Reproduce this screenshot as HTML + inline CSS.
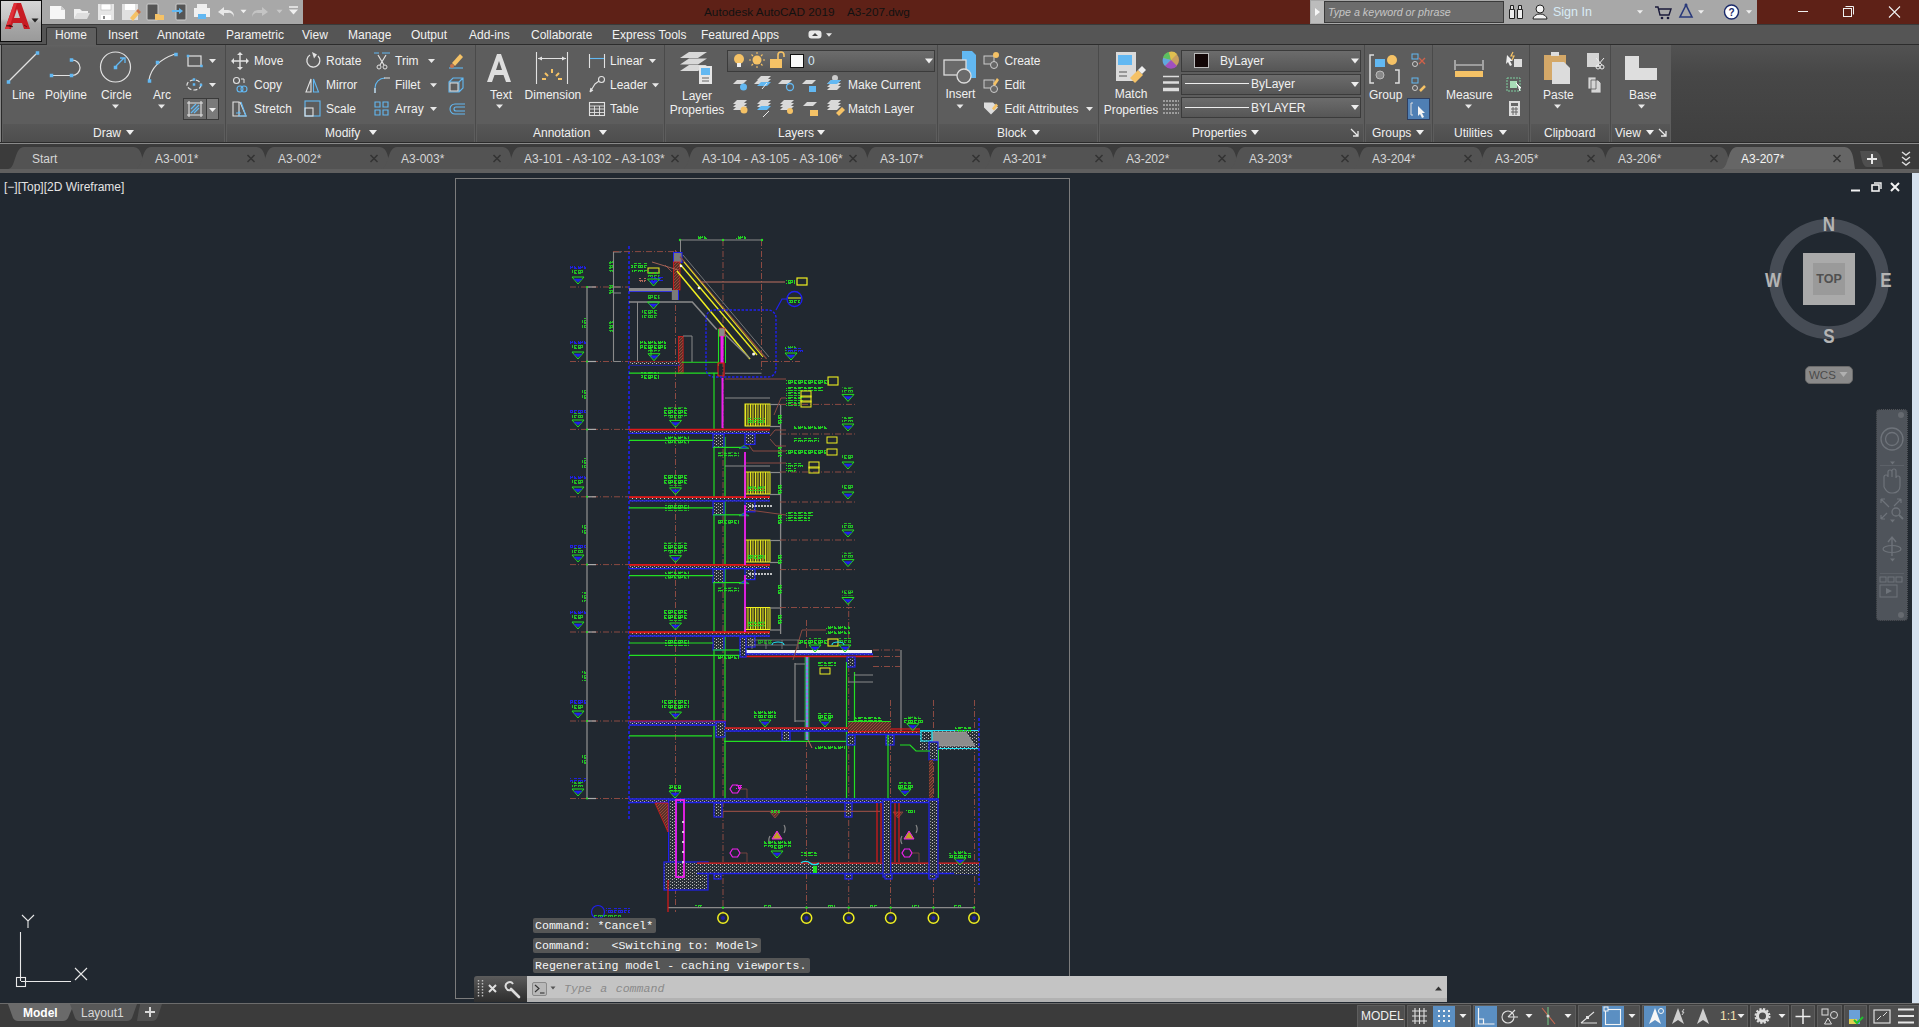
<!DOCTYPE html><html><head><meta charset="utf-8"><style>
html,body{margin:0;padding:0;width:1919px;height:1027px;overflow:hidden;background:#212830;font-family:"Liberation Sans", sans-serif;}
div{box-sizing:border-box;}
</style></head><body>
<div style="position:absolute;left:0px;top:0px;width:1919px;height:24px;background:#5e2117;"></div>
<div style="position:absolute;left:41px;top:0px;width:262px;height:24px;background:#a8a8a8;"></div>
<div style="position:absolute;left:1310px;top:0px;width:447px;height:24px;background:#a8a8a8;"></div>
<div style="position:absolute;left:1311px;top:1px;width:13px;height:22px;background:#bcbcbc;"></div>
<div style="position:absolute;left:1324px;top:1px;width:180px;height:22px;background:#6c6c6c;border:1px solid #3a3a3a;"></div>
<div style="position:absolute;left:0px;top:24px;width:1919px;height:20px;background:#555555;"></div>
<div style="position:absolute;left:0px;top:24px;width:1919px;height:1px;background:#3a3a3a;"></div>
<div style="position:absolute;left:0px;top:44px;width:1919px;height:1px;background:#2c2c2c;"></div>
<div style="position:absolute;left:0px;top:0px;width:42px;height:42px;background:#0c0c0c;"></div>
<div style="position:absolute;left:1px;top:1px;width:40px;height:40px;background:linear-gradient(#d6d6d6,#c4c4c4 45%,#a8a8a8 55%,#9a9a9a);"></div>
<div style="position:absolute;left:46px;top:27px;width:51px;height:18px;background:#5f5f5f;border:1px solid #2e2e2e;border-bottom:none;border-radius:2px 2px 0 0;"></div>
<div style="position:absolute;left:0px;top:45px;width:1919px;height:98px;background:linear-gradient(#525252,#474747 30%,#3f3f3f);"></div>
<div style="position:absolute;left:2px;top:45px;width:223px;height:97px;background:linear-gradient(#626262,#5d5d5d 3px,#5d5d5d);"></div>
<div style="position:absolute;left:3px;top:124px;width:221px;height:18px;background:linear-gradient(#575757,#4e4e4e);"></div>
<div style="position:absolute;left:225px;top:45px;width:1px;height:97px;background:#4a4a4a;"></div>
<div style="position:absolute;left:226px;top:45px;width:249px;height:97px;background:linear-gradient(#626262,#5d5d5d 3px,#5d5d5d);"></div>
<div style="position:absolute;left:227px;top:124px;width:247px;height:18px;background:linear-gradient(#575757,#4e4e4e);"></div>
<div style="position:absolute;left:475px;top:45px;width:1px;height:97px;background:#4a4a4a;"></div>
<div style="position:absolute;left:476px;top:45px;width:188px;height:97px;background:linear-gradient(#626262,#5d5d5d 3px,#5d5d5d);"></div>
<div style="position:absolute;left:477px;top:124px;width:186px;height:18px;background:linear-gradient(#575757,#4e4e4e);"></div>
<div style="position:absolute;left:664px;top:45px;width:1px;height:97px;background:#4a4a4a;"></div>
<div style="position:absolute;left:665px;top:45px;width:272px;height:97px;background:linear-gradient(#626262,#5d5d5d 3px,#5d5d5d);"></div>
<div style="position:absolute;left:666px;top:124px;width:270px;height:18px;background:linear-gradient(#575757,#4e4e4e);"></div>
<div style="position:absolute;left:937px;top:45px;width:1px;height:97px;background:#4a4a4a;"></div>
<div style="position:absolute;left:938px;top:45px;width:160px;height:97px;background:linear-gradient(#626262,#5d5d5d 3px,#5d5d5d);"></div>
<div style="position:absolute;left:939px;top:124px;width:158px;height:18px;background:linear-gradient(#575757,#4e4e4e);"></div>
<div style="position:absolute;left:1098px;top:45px;width:1px;height:97px;background:#4a4a4a;"></div>
<div style="position:absolute;left:1099px;top:45px;width:265px;height:97px;background:linear-gradient(#626262,#5d5d5d 3px,#5d5d5d);"></div>
<div style="position:absolute;left:1100px;top:124px;width:263px;height:18px;background:linear-gradient(#575757,#4e4e4e);"></div>
<div style="position:absolute;left:1364px;top:45px;width:1px;height:97px;background:#4a4a4a;"></div>
<div style="position:absolute;left:1365px;top:45px;width:67px;height:97px;background:linear-gradient(#626262,#5d5d5d 3px,#5d5d5d);"></div>
<div style="position:absolute;left:1366px;top:124px;width:65px;height:18px;background:linear-gradient(#575757,#4e4e4e);"></div>
<div style="position:absolute;left:1432px;top:45px;width:1px;height:97px;background:#4a4a4a;"></div>
<div style="position:absolute;left:1433px;top:45px;width:96px;height:97px;background:linear-gradient(#626262,#5d5d5d 3px,#5d5d5d);"></div>
<div style="position:absolute;left:1434px;top:124px;width:94px;height:18px;background:linear-gradient(#575757,#4e4e4e);"></div>
<div style="position:absolute;left:1529px;top:45px;width:1px;height:97px;background:#4a4a4a;"></div>
<div style="position:absolute;left:1530px;top:45px;width:80px;height:97px;background:linear-gradient(#626262,#5d5d5d 3px,#5d5d5d);"></div>
<div style="position:absolute;left:1531px;top:124px;width:78px;height:18px;background:linear-gradient(#575757,#4e4e4e);"></div>
<div style="position:absolute;left:1610px;top:45px;width:1px;height:97px;background:#4a4a4a;"></div>
<div style="position:absolute;left:1611px;top:45px;width:60px;height:97px;background:linear-gradient(#626262,#5d5d5d 3px,#5d5d5d);"></div>
<div style="position:absolute;left:1612px;top:124px;width:58px;height:18px;background:linear-gradient(#575757,#4e4e4e);"></div>
<div style="position:absolute;left:1671px;top:45px;width:0px;height:97px;background:#4a4a4a;"></div>
<div style="position:absolute;left:0px;top:45px;width:1px;height:98px;background:#8a8a8a;"></div>
<div style="position:absolute;left:1px;top:45px;width:1px;height:97px;background:#2a2a2a;"></div>
<div style="position:absolute;left:0px;top:142px;width:1919px;height:1px;background:#2a2a2a;"></div>
<div style="position:absolute;left:0px;top:143px;width:1919px;height:1px;background:#8a8a8a;"></div>
<div style="position:absolute;left:183px;top:98px;width:36px;height:22px;background:#3a3a3a;"></div>
<div style="position:absolute;left:184px;top:99px;width:22px;height:20px;background:#6a6a6a;"></div>
<div style="position:absolute;left:207px;top:99px;width:11px;height:20px;background:#7a7a7a;"></div>
<div style="position:absolute;left:727px;top:50px;width:208px;height:22px;background:linear-gradient(#6c6c6c,#575757);border:1px solid #3b3b3b;"></div>
<div style="position:absolute;left:1181px;top:50px;width:180px;height:22px;background:linear-gradient(#6c6c6c,#565656);border:1px solid #3b3b3b;"></div>
<div style="position:absolute;left:1181px;top:74px;width:180px;height:21px;background:linear-gradient(#6c6c6c,#565656);border:1px solid #3b3b3b;"></div>
<div style="position:absolute;left:1181px;top:97px;width:180px;height:21px;background:linear-gradient(#6c6c6c,#565656);border:1px solid #3b3b3b;"></div>
<div style="position:absolute;left:1194px;top:53px;width:15px;height:15px;background:#120606;border:1px solid #bbb;"></div>
<div style="position:absolute;left:1185px;top:83px;width:64px;height:1px;background:#eeeeee;"></div>
<div style="position:absolute;left:1185px;top:107px;width:64px;height:1px;background:#eeeeee;"></div>
<div style="position:absolute;left:1407px;top:98px;width:23px;height:22px;background:#4f7fb4;border:1px solid #2f3f5f;"></div>
<div style="position:absolute;left:0px;top:144px;width:1919px;height:29px;background:#3b3b3b;"></div>
<div style="position:absolute;left:0px;top:169px;width:1919px;height:4px;background:#5f5f5f;"></div>
<svg width="1919" height="1027" style="position:absolute;left:0;top:0"><path d="M126.0 130.0h8l-4.0 5z" fill="#f0f0f0"/><path d="M369.0 130.0h8l-4.0 5z" fill="#f0f0f0"/><path d="M599.0 130.0h8l-4.0 5z" fill="#f0f0f0"/><path d="M817.0 130.0h8l-4.0 5z" fill="#f0f0f0"/><path d="M1032.0 130.0h8l-4.0 5z" fill="#f0f0f0"/><path d="M1251.0 130.0h8l-4.0 5z" fill="#f0f0f0"/><path d="M1416.0 130.0h8l-4.0 5z" fill="#f0f0f0"/><path d="M1499.0 130.0h8l-4.0 5z" fill="#f0f0f0"/><path d="M1646.0 130.0h8l-4.0 5z" fill="#f0f0f0"/><path d="M1351 129l7 7M1358 131v5h-5" stroke="#e8e8e8" stroke-width="1.3" fill="none"/><path d="M1659 129l7 7M1666 131v5h-5" stroke="#e8e8e8" stroke-width="1.3" fill="none"/><line x1="9" y1="81" x2="36" y2="54" stroke="#e2e2e2" stroke-width="1.2"/><rect x="6.75" y="80.25" width="3.5" height="3.5" fill="#62b8f2"/><rect x="35.75" y="51.25" width="3.5" height="3.5" fill="#62b8f2"/><path d="M53 75.5H70M72 60a8 7.7 0 0 1 0 15.5" stroke="#e2e2e2" stroke-width="1.2" fill="none"/><rect x="49.75" y="73.75" width="3.5" height="3.5" fill="#62b8f2"/><rect x="69.75" y="73.75" width="3.5" height="3.5" fill="#62b8f2"/><rect x="69.75" y="58.25" width="3.5" height="3.5" fill="#62b8f2"/><circle cx="115.5" cy="67" r="15" stroke="#e2e2e2" stroke-width="1.2" fill="none"/><path d="M116 66l8-8M120 58h5v5" stroke="#62b8f2" stroke-width="1.3" fill="none"/><rect x="113.75" y="65.75" width="3.5" height="3.5" fill="#62b8f2"/><path d="M112.0 104.5h7l-3.5 4z" fill="#e8e8e8"/><path d="M149 80Q152 62 175 54" stroke="#e2e2e2" stroke-width="1.2" fill="none"/><rect x="147.75" y="79.25" width="3.5" height="3.5" fill="#62b8f2"/><rect x="155.75" y="60.75" width="3.5" height="3.5" fill="#62b8f2"/><rect x="174.25" y="52.75" width="3.5" height="3.5" fill="#62b8f2"/><path d="M158.0 104.5h7l-3.5 4z" fill="#e8e8e8"/><rect x="188" y="56" width="13" height="10" stroke="#e2e2e2" stroke-width="1.2" fill="none"/><rect x="186.75" y="54.75" width="2.5" height="2.5" fill="#62b8f2"/><rect x="200.25" y="64.75" width="2.5" height="2.5" fill="#62b8f2"/><path d="M209.0 59.0h7l-3.5 4z" fill="#e8e8e8"/><ellipse cx="194" cy="85" rx="7" ry="5" stroke="#e2e2e2" stroke-width="1.2" fill="none" stroke-dasharray="4 2"/><rect x="192.75" y="83.25" width="2.5" height="2.5" fill="#62b8f2"/><rect x="192.75" y="78.25" width="2.5" height="2.5" fill="#62b8f2"/><rect x="199.75" y="83.75" width="2.5" height="2.5" fill="#62b8f2"/><path d="M209.0 83.0h7l-3.5 4z" fill="#e8e8e8"/><path d="M187 103h16M187 115h16M189 101v16M201 101v16" stroke="#e2e2e2" stroke-width="1.1"/><path d="M191 113l8-8M191 109l5-5M194 113l5-5" stroke="#62b8f2" stroke-width="1.2"/><path d="M209.0 108.0h7l-3.5 4z" fill="#f0f0f0"/><path d="M240 53v16M232 61h16" stroke="#e2e2e2" stroke-width="1.4"/><path d="M240 52l-3 3h6zM240 70l-3-3h6zM231 61l3-3v6zM249 61l-3-3v6z" fill="#e2e2e2"/><path d="M318 56a6.5 6.5 0 1 1-8-1" stroke="#e2e2e2" stroke-width="1.3" fill="none"/><path d="M312 52l5 2.5-3 4z" fill="#e2e2e2"/><path d="M374 53h5M382 53h8" stroke="#62b8f2" stroke-width="1.1"/><path d="M378 55l6 10M386 55l-6 10" stroke="#e2e2e2" stroke-width="1.2"/><circle cx="379" cy="67" r="2" stroke="#e2e2e2" fill="none"/><circle cx="385" cy="67" r="2" stroke="#e2e2e2" fill="none"/><path d="M428.0 59.0h7l-3.5 4z" fill="#e8e8e8"/><path d="M449 68h14" stroke="#62b8f2" stroke-width="1.1"/><path d="M452 63l8-9 3 3-8 9z" fill="#f5c266"/><circle cx="452" cy="66" r="2" fill="#c9744a"/><circle cx="236.5" cy="80.5" r="3" stroke="#e2e2e2" fill="none" stroke-width="1.1"/><path d="M241 79h3v4" stroke="#e2e2e2" fill="none"/><circle cx="240" cy="89" r="3" stroke="#62b8f2" fill="none" stroke-width="1.1"/><circle cx="244" cy="89" r="3" stroke="#62b8f2" fill="none" stroke-width="1.1"/><path d="M311 92h-5l5-13z" stroke="#e2e2e2" fill="none" stroke-width="1.1"/><path d="M313.5 92h5l-5-13z" stroke="#62b8f2" fill="none" stroke-width="1.1"/><path d="M375 93v-5a10 10 0 0 1 10-10" stroke="#62b8f2" fill="none" stroke-width="1.1"/><path d="M384 78h6M375 88v5" stroke="#e2e2e2" stroke-width="1.1"/><path d="M430.0 83.3h7l-3.5 4z" fill="#e8e8e8"/><path d="M449 82h10v10h-10zM449 82l4-4h10v10l-4 4M459 82l4-4" stroke="#62b8f2" fill="none" stroke-width="1.1"/><rect x="450" y="83" width="8" height="8" stroke="#e2e2e2" fill="none"/><path d="M233 116v-14h6v14zM240 102l6 14h-10" stroke="#e2e2e2" fill="none" stroke-width="1.1"/><path d="M241 102l5 14h-8M236 113h4l-1.5-1.5" stroke="#62b8f2" fill="none" stroke-width="1.1"/><rect x="305" y="101" width="15" height="15" stroke="#62b8f2" fill="none" stroke-width="1.1"/><rect x="305" y="108" width="8" height="8" stroke="#e2e2e2" fill="none" stroke-width="1.1"/><path d="M375 102h5v5h-5zM383 102h5v5h-5zM375 110h5v5h-5zM383 110h5v5h-5z" stroke="#62b8f2" fill="none" stroke-width="1.1"/><path d="M430.0 107.0h7l-3.5 4z" fill="#e8e8e8"/><path d="M465 104h-10a5 5 0 0 0 0 10h10M465 107h-9a2 2 0 0 0 0 4h9" stroke="#62b8f2" fill="none" stroke-width="1.1"/><path d="M487 82l10-28h4l10 28h-5l-2.5-7h-9l-2.5 7zM496 70h6l-3-9z" fill="#dedede" fill-rule="evenodd"/><path d="M496.0 104.5h7l-3.5 4z" fill="#e8e8e8"/><path d="M536.5 52v32M567.5 52v32M538 58.5h28" stroke="#e2e2e2" stroke-width="1.1"/><path d="M538 58.5l4-2v4zM566 58.5l-4-2v4z" fill="#e2e2e2"/><path d="M552 69v4M545 73l3 3M559 73l-3 3M542 79h4M558 79h4" stroke="#f5c266" stroke-width="2"/><path d="M589.5 54v14M604.5 54v14" stroke="#e2e2e2" stroke-width="1.1"/><path d="M590 58.5h14" stroke="#62b8f2" stroke-width="1.1"/><path d="M649.0 59.0h7l-3.5 4z" fill="#e8e8e8"/><circle cx="601.5" cy="79.5" r="3" stroke="#e2e2e2" fill="none" stroke-width="1.1"/><path d="M599 81l-4 3-5 8M590 92l1-4M590 92l3-2" stroke="#e2e2e2" fill="none" stroke-width="1.1"/><path d="M652.0 83.3h7l-3.5 4z" fill="#e8e8e8"/><rect x="589.5" y="102.5" width="15" height="13" stroke="#e2e2e2" fill="none" stroke-width="1.1"/><path d="M590 106h14M590 109h14M590 112.5h14M594.5 106v9M599.5 106v9" stroke="#e2e2e2" stroke-width="0.9"/><path d="M689 52.0h18l-9 6h-18z" fill="#d9d9d9"/><path d="M689 58.5h18l-9 6h-18z" fill="#d9d9d9"/><path d="M689 65.0h18l-9 6h-18z" fill="#d9d9d9"/><rect x="699" y="66" width="13" height="18" fill="#e6e6e6"/><rect x="701" y="68" width="9" height="7" fill="#62b8f2"/><path d="M702 78h7M702 81h7" stroke="#555" stroke-width="0.9"/><circle cx="739" cy="59" r="5" fill="#f5c266"/><rect x="737" y="63" width="4" height="4" fill="#eee"/><circle cx="757" cy="60" r="4.5" fill="#f5c266"/><path d="M757 52v2M757 66v2M749 60h2M763 60h2M751.5 54.5l1.5 1.5M761 64l1.5 1.5M751.5 65.5l1.5-1.5M761 56l1.5-1.5" stroke="#f5c266" stroke-width="1.1"/><rect x="770" y="59" width="12" height="9" fill="#f5c266"/><path d="M778 59v-4a3 3 0 0 1 6 0v2" stroke="#f5c266" stroke-width="1.6" fill="none"/><rect x="790.5" y="54.5" width="13" height="13" fill="#fafafa" stroke="#111"/><path d="M925.0 58.5h8l-4.0 5z" fill="#eee"/><path d="M733 84l4-4h10l-4 4z" fill="#d9d9d9"/><path d="M754 84l4-4h10l-4 4z" fill="#d9d9d9"/><path d="M778 84l4-4h10l-4 4z" fill="#d9d9d9"/><path d="M802 84l4-4h10l-4 4z" fill="#d9d9d9"/><circle cx="743.5" cy="87" r="3.5" fill="#62b8f2"/><path d="M757 80l4-4h10l-4 4zM757 83l4-4h10l-4 4z" fill="#d9d9d9"/><path d="M757 86l4-4h10l-4 4z" fill="#62b8f2"/><path d="M767 83l-5 6" stroke="#eee"/><circle cx="790" cy="87" r="3.5" fill="none" stroke="#62b8f2" stroke-width="1.3"/><rect x="809" y="86" width="7" height="6" fill="#62b8f2"/><circle cx="835" cy="78" r="3" fill="#ccc"/><path d="M827 84l4-4h10l-4 4zM827 87l4-4h10l-4 4zM827 90l4-4h10l-4 4z" fill="#d9d9d9"/><path d="M827 84l4-4h10l-4 4z" fill="#62b8f2"/><path d="M733 104l4-4h10l-4 4zM733 107l4-4h10l-4 4zM733 110l4-4h10l-4 4z" fill="#d9d9d9"/><circle cx="744" cy="110" r="3.5" fill="#f5c266"/><path d="M757 104l4-4h10l-4 4zM757 107l4-4h10l-4 4z" fill="#d9d9d9"/><path d="M757 110l4-4h10l-4 4z" fill="#62b8f2"/><path d="M763 117l6-6" stroke="#eee"/><path d="M780 104l4-4h10l-4 4zM780 107l4-4h10l-4 4zM780 110l4-4h10l-4 4z" fill="#d9d9d9"/><circle cx="790" cy="111" r="3" fill="#f5c266"/><path d="M803 106l4-4h10l-4 4z" fill="#d9d9d9"/><rect x="810" y="110" width="8" height="6" fill="#f5c266"/><path d="M827 104l4-4h10l-4 4zM827 107l4-4h10l-4 4zM827 110l4-4h10l-4 4z" fill="#d9d9d9"/><path d="M836 113l6-6 3 3-6 6z" fill="#f5c266"/><path d="M962 51h10l4 4v23h-14z" fill="#62b8f2"/><rect x="944" y="60" width="22" height="15" fill="#6a6a6a" stroke="#dcdcdc" stroke-width="1.3"/><circle cx="964" cy="76" r="7" fill="#6a6a6a" stroke="#dcdcdc" stroke-width="1.3"/><path d="M956.5 104.5h7l-3.5 4z" fill="#e8e8e8"/><rect x="984" y="56" width="10" height="8" fill="#666" stroke="#ccc"/><circle cx="994" cy="65" r="3.5" fill="#666" stroke="#ccc"/><circle cx="996" cy="55" r="3" fill="#f5c266"/><rect x="984" y="80" width="10" height="8" fill="#666" stroke="#ccc"/><circle cx="994" cy="89" r="3.5" fill="#666" stroke="#ccc"/><path d="M993 84l4-6 2 2-4 6z" fill="#f5c266"/><path d="M984 102.5h9l5 5-7 7-7-7z" fill="#ddd"/><path d="M992 108.5l4-5 2 2-4 5z" fill="#f5c266"/><path d="M1086.0 107.0h7l-3.5 4z" fill="#e8e8e8"/><rect x="1116" y="52" width="20" height="29" fill="#dadada"/><rect x="1118" y="55" width="14" height="10" fill="#62b8f2"/><path d="M1119 72h8M1119 76h8" stroke="#555"/><path d="M1130 78l8-8 5 5-8 8z" fill="#f5c266"/><path d="M1138 70l4-4 4 4-4 4z" fill="#eee"/><circle cx="1171" cy="60" r="8" fill="#c9a060"/><path d="M1171 60L1163 58A8 8 0 0 1 1169 52z" fill="#5cc060"/><path d="M1171 60L1165 66A8 8 0 0 1 1163 58z" fill="#60a8e0"/><path d="M1171 60L1177 66A8 8 0 0 1 1165 66z" fill="#a050c0"/><path d="M1171 60L1169 52A8 8 0 0 1 1177 54z" fill="#e0c050"/><path d="M1351.0 58.5h8l-4.0 5z" fill="#eee"/><path d="M1351.0 82.0h8l-4.0 5z" fill="#eee"/><path d="M1351.0 105.0h8l-4.0 5z" fill="#eee"/><path d="M1163 76.5h16" stroke="#ddd" stroke-width="1.5"/><path d="M1163 82.5h16" stroke="#ddd" stroke-width="2.5"/><path d="M1163 89.5h16" stroke="#ddd" stroke-width="3.5"/><path d="M1163 101h16M1163 105h16M1163 109h16M1163 113h16" stroke="#ddd" stroke-width="1" stroke-dasharray="2 1"/><path d="M1374 55h-4v28h4M1395 70h4v13h-4" stroke="#ddd" stroke-width="1.5" fill="none"/><rect x="1375" y="59" width="10" height="8" fill="#62b8f2"/><circle cx="1380" cy="75" r="4" fill="#888" stroke="#bbb"/><circle cx="1392" cy="60" r="5" fill="#f5c266"/><rect x="1412" y="54" width="6" height="5" fill="none" stroke="#62b8f2"/><circle cx="1415" cy="64" r="2.5" fill="none" stroke="#ccc"/><path d="M1419 58l6 6M1425 58l-6 6" stroke="#d0624a" stroke-width="1.4"/><rect x="1412" y="78" width="6" height="5" fill="none" stroke="#62b8f2"/><circle cx="1415" cy="88" r="2.5" fill="none" stroke="#ccc"/><path d="M1420 91l5-5" stroke="#f5c266" stroke-width="2.5"/><path d="M1413 103h-2v12h2" stroke="#ddd" fill="none"/><path d="M1418 106l7 7-3 0 2 4-2 1-2-4-2 2z" fill="#f4f4f4"/><path d="M1455 60v10M1483 60v10M1456 65h26" stroke="#ddd" stroke-width="1.1"/><rect x="1455" y="71" width="28" height="6" fill="#f5c266"/><path d="M1465.0 104.5h7l-3.5 4z" fill="#e8e8e8"/><path d="M1507 55l6 6-3 0 2 4-2 1-2-4-2 2z" fill="#eee"/><rect x="1514" y="59" width="8" height="8" fill="#ddd"/><path d="M1513 52l-2 4h3l-2 4" stroke="#f5c266" stroke-width="1.2" fill="none"/><rect x="1507" y="78" width="13" height="13" fill="none" stroke="#7fd0a0" stroke-dasharray="2 1"/><rect x="1510" y="81" width="7" height="7" fill="#a9dcb8"/><path d="M1516 83l5 5-2 0 1 3" stroke="#fff" fill="#eee"/><rect x="1509" y="101" width="11" height="15" fill="#ddd"/><rect x="1511" y="103" width="7" height="3" fill="#666"/><path d="M1511 109h7M1511 112h7M1513 107v8M1516 107v8" stroke="#666" stroke-width="1"/><rect x="1544" y="55" width="22" height="25" fill="#d4a868"/><rect x="1551" y="52" width="8" height="4" fill="#ddd"/><path d="M1552 62h12l6 6v16h-18z" fill="#dcdcdc"/><path d="M1554.0 104.5h7l-3.5 4z" fill="#e8e8e8"/><rect x="1587" y="53" width="12" height="14" fill="#d5d5d5"/><circle cx="1598" cy="67" r="2" fill="none" stroke="#eee"/><circle cx="1602" cy="67" r="2" fill="none" stroke="#eee"/><path d="M1596 58l6 7M1604 58l-6 7" stroke="#eee"/><path d="M1588 77h8v12h-8zM1591 80h7l3 3v10h-10z" fill="#d5d5d5" stroke="#5a5a5a" stroke-width="0.8"/><path d="M1625 56h14v12h18v12h-32z" fill="#dedede"/><path d="M1638.0 104.5h7l-3.5 4z" fill="#e8e8e8"/><path d="M5 29L14 3h7l9 26h-6l-2-6h-9l-2 6zM14 18h6l-3-9z" fill="#c81c24" fill-rule="evenodd"/><path d="M5 29l9-26h3l-8 26z" fill="#e03038"/><path d="M6 26l4-1 3 2M24 25l3 2" stroke="#6a1010" stroke-width="1"/><path d="M31.5 18.5h7l-3.5 4z" fill="#222"/><rect x="808.5" y="30.5" width="13" height="8" rx="3" fill="#e8e8e8"/><path d="M812 36l3-3 3 3z" fill="#444"/><path d="M826.0 33.2h6l-3.0 3.5z" fill="#e8e8e8"/><path d="M50 6h11l4 4v9h-15z" fill="#f6f6f6"/><path d="M61 6v4h4" fill="#ccc"/><path d="M74 9h6l2 2h6v2h-10l-4 6z" fill="#f0f0f0"/><path d="M77 13h13l-3 6h-13z" fill="#dedede"/><path d="M98 4h16v16h-16z" fill="#e6e6e6"/><rect x="101" y="4" width="10" height="6" fill="#fff" stroke="#aaa" stroke-width="0.5"/><rect x="101" y="15" width="10" height="5" fill="#fff"/><rect x="103" y="16" width="2" height="3" fill="#888"/><path d="M122 4h16v16h-16z" fill="#e0e0e0"/><rect x="125" y="4" width="10" height="6" fill="#fff"/><path d="M130 18l6-7 3 3-6 7z" fill="#f5c266"/><path d="M136 11l2-2 3 3-2 2z" fill="#c9744a"/><rect x="147" y="4" width="11" height="16" rx="1" fill="#555" stroke="#ccc"/><path d="M155 14h4l1 1h4v5h-9z" fill="#f5c266"/><rect x="176" y="4" width="10" height="16" rx="1" fill="#555" stroke="#ccc"/><path d="M172 10h7v-2l4 3-4 3v-2h-7z" fill="#62b8f2"/><rect x="197" y="4" width="10" height="5" fill="#eee"/><rect x="194" y="8" width="16" height="9" fill="#f0f0f0"/><rect x="198" y="14" width="8" height="5" fill="#62b8f2"/><path d="M218 12l6-5v3h4a6 6 0 0 1 6 6v1a5 5 0 0 0-6-4h-4v3z" fill="#e8e8e8"/><path d="M240.5 9.8h6l-3.0 3.5z" fill="#f0f0f0"/><path d="M268 12l-6-5v3h-4a6 6 0 0 0-6 6v1a5 5 0 0 1 6-4h4v3z" fill="#c4c4c4"/><path d="M276.5 9.8h6l-3.0 3.5z" fill="#c8c8c8"/><path d="M289 7h9" stroke="#f0f0f0" stroke-width="1.5"/><path d="M289.0 9.5h9l-4.5 5z" fill="#f0f0f0"/><path d="M1315 8l5 4-5 4z" fill="#f6f6f6"/><path d="M1509.5 9.5h5v9h-5zM1517.5 9.5h5v9h-5z" fill="#f0f0f0" stroke="#222"/><path d="M1510.5 5.5h3v4h-3zM1518.5 5.5h3v4h-3z" fill="#ddd" stroke="#222"/><circle cx="1540" cy="9" r="4" fill="#f4f4f4" stroke="#222"/><path d="M1533 19a7 5 0 0 1 14 0z" fill="#f4f4f4" stroke="#222"/><path d="M1637.0 10.2h6l-3.0 3.5z" fill="#eee"/><path d="M1655 7h3l2 8h9l2-6h-12" stroke="#1a1a3a" stroke-width="1.4" fill="none"/><circle cx="1662" cy="18" r="1.3" fill="#1a1a3a"/><circle cx="1668" cy="18" r="1.3" fill="#1a1a3a"/><path d="M1686 5l-6 12h12z" fill="none" stroke="#2a3a7a" stroke-width="1.6"/><circle cx="1686" cy="5" r="1.5" fill="#2a3a7a"/><path d="M1698.0 10.2h6l-3.0 3.5z" fill="#eee"/><circle cx="1731.5" cy="12" r="7" fill="#fff" stroke="#1a2a6a" stroke-width="1.4"/><text x="1731.5" y="16" font-size="10" font-weight="bold" text-anchor="middle" fill="#1a2a6a" font-family="Liberation Sans">?</text><path d="M1746.0 10.2h6l-3.0 3.5z" fill="#eee"/><path d="M1798 11.5h10" stroke="#f0f0f0" stroke-width="1"/><rect x="1843.5" y="8.5" width="8" height="8" fill="none" stroke="#f0f0f0"/><path d="M1845.5 6.5h8v8" stroke="#f0f0f0" fill="none"/><path d="M1889 6.5l11 11M1900 6.5l-11 11" stroke="#f0f0f0" stroke-width="1.1"/><path d="M8 169 C16 169 14 147 24 147 H132 C140 147 142 152 144 169 Z" fill="#535353"/><path d="M135 169 C143 169 141 147 151 147 H255 C263 147 265 152 267 169 Z" fill="#535353"/><path d="M247.5 155l7 7M254.5 155l-7 7" stroke="#333" stroke-width="1.5"/><path d="M258 169 C266 169 264 147 274 147 H378 C386 147 388 152 390 169 Z" fill="#535353"/><path d="M370.5 155l7 7M377.5 155l-7 7" stroke="#333" stroke-width="1.5"/><path d="M381 169 C389 169 387 147 397 147 H501 C509 147 511 152 513 169 Z" fill="#535353"/><path d="M493.5 155l7 7M500.5 155l-7 7" stroke="#333" stroke-width="1.5"/><path d="M504 169 C512 169 510 147 520 147 H679 C687 147 689 152 691 169 Z" fill="#535353"/><path d="M671.5 155l7 7M678.5 155l-7 7" stroke="#333" stroke-width="1.5"/><path d="M682 169 C690 169 688 147 698 147 H857 C865 147 867 152 869 169 Z" fill="#535353"/><path d="M849.5 155l7 7M856.5 155l-7 7" stroke="#333" stroke-width="1.5"/><path d="M860 169 C868 169 866 147 876 147 H980 C988 147 990 152 992 169 Z" fill="#535353"/><path d="M972.5 155l7 7M979.5 155l-7 7" stroke="#333" stroke-width="1.5"/><path d="M983 169 C991 169 989 147 999 147 H1103 C1111 147 1113 152 1115 169 Z" fill="#535353"/><path d="M1095.5 155l7 7M1102.5 155l-7 7" stroke="#333" stroke-width="1.5"/><path d="M1106 169 C1114 169 1112 147 1122 147 H1226 C1234 147 1236 152 1238 169 Z" fill="#535353"/><path d="M1218.5 155l7 7M1225.5 155l-7 7" stroke="#333" stroke-width="1.5"/><path d="M1229 169 C1237 169 1235 147 1245 147 H1349 C1357 147 1359 152 1361 169 Z" fill="#535353"/><path d="M1341.5 155l7 7M1348.5 155l-7 7" stroke="#333" stroke-width="1.5"/><path d="M1352 169 C1360 169 1358 147 1368 147 H1472 C1480 147 1482 152 1484 169 Z" fill="#535353"/><path d="M1464.5 155l7 7M1471.5 155l-7 7" stroke="#333" stroke-width="1.5"/><path d="M1475 169 C1483 169 1481 147 1491 147 H1595 C1603 147 1605 152 1607 169 Z" fill="#535353"/><path d="M1587.5 155l7 7M1594.5 155l-7 7" stroke="#333" stroke-width="1.5"/><path d="M1598 169 C1606 169 1604 147 1614 147 H1718 C1726 147 1728 152 1730 169 Z" fill="#535353"/><path d="M1710.5 155l7 7M1717.5 155l-7 7" stroke="#333" stroke-width="1.5"/><path d="M1721 169 C1729 169 1727 147 1737 147 H1843 C1851 147 1853 152 1855 169 Z" fill="#666"/><path d="M1833.5 155l7 7M1840.5 155l-7 7" stroke="#333" stroke-width="1.5"/><path d="M1860 151h14c6 0 8 8 9 16h-16c-5 0-6-12-7-16z" fill="#4f4f4f"/><path d="M1872 154v10M1867 159h10" stroke="#e8e8e8" stroke-width="2"/><path d="M1902 152l4 3 4-3M1902 157l4 3 4-3M1902 162l4 3 4-3" stroke="#ddd" stroke-width="1.4" fill="none"/></svg>
<div style="position:absolute;left:1328px;top:5.0px;height:14px;line-height:14px;font-size:10.7px;color:#c6c6c6;white-space:pre;font-family:'Liberation Sans', sans-serif;font-style:italic;">Type a keyword or phrase</div>
<div style="position:absolute;left:1553px;top:4.0px;height:17px;line-height:17px;font-size:12.5px;color:#d8ecf6;white-space:pre;font-family:'Liberation Sans', sans-serif;">Sign In</div>
<div style="position:absolute;left:704px;top:4.0px;height:16px;line-height:16px;font-size:11.8px;color:#121212;white-space:pre;font-family:'Liberation Sans', sans-serif;">Autodesk AutoCAD 2019    A3-207.dwg</div>
<div style="position:absolute;left:55px;top:27.0px;height:16px;line-height:16px;font-size:12px;color:#f2f2f2;white-space:pre;font-family:'Liberation Sans', sans-serif;">Home</div>
<div style="position:absolute;left:108px;top:27.0px;height:16px;line-height:16px;font-size:12px;color:#f2f2f2;white-space:pre;font-family:'Liberation Sans', sans-serif;">Insert</div>
<div style="position:absolute;left:157px;top:27.0px;height:16px;line-height:16px;font-size:12px;color:#f2f2f2;white-space:pre;font-family:'Liberation Sans', sans-serif;">Annotate</div>
<div style="position:absolute;left:226px;top:27.0px;height:16px;line-height:16px;font-size:12px;color:#f2f2f2;white-space:pre;font-family:'Liberation Sans', sans-serif;">Parametric</div>
<div style="position:absolute;left:302px;top:27.0px;height:16px;line-height:16px;font-size:12px;color:#f2f2f2;white-space:pre;font-family:'Liberation Sans', sans-serif;">View</div>
<div style="position:absolute;left:348px;top:27.0px;height:16px;line-height:16px;font-size:12px;color:#f2f2f2;white-space:pre;font-family:'Liberation Sans', sans-serif;">Manage</div>
<div style="position:absolute;left:411px;top:27.0px;height:16px;line-height:16px;font-size:12px;color:#f2f2f2;white-space:pre;font-family:'Liberation Sans', sans-serif;">Output</div>
<div style="position:absolute;left:469px;top:27.0px;height:16px;line-height:16px;font-size:12px;color:#f2f2f2;white-space:pre;font-family:'Liberation Sans', sans-serif;">Add-ins</div>
<div style="position:absolute;left:531px;top:27.0px;height:16px;line-height:16px;font-size:12px;color:#f2f2f2;white-space:pre;font-family:'Liberation Sans', sans-serif;">Collaborate</div>
<div style="position:absolute;left:612px;top:27.0px;height:16px;line-height:16px;font-size:12px;color:#f2f2f2;white-space:pre;font-family:'Liberation Sans', sans-serif;">Express Tools</div>
<div style="position:absolute;left:701px;top:27.0px;height:16px;line-height:16px;font-size:12px;color:#f2f2f2;white-space:pre;font-family:'Liberation Sans', sans-serif;">Featured Apps</div>
<div style="position:absolute;left:93px;top:124.5px;height:16px;line-height:16px;font-size:12px;color:#f0f0f0;white-space:pre;font-family:'Liberation Sans', sans-serif;">Draw</div>
<div style="position:absolute;left:325px;top:124.5px;height:16px;line-height:16px;font-size:12px;color:#f0f0f0;white-space:pre;font-family:'Liberation Sans', sans-serif;">Modify</div>
<div style="position:absolute;left:533px;top:124.5px;height:16px;line-height:16px;font-size:12px;color:#f0f0f0;white-space:pre;font-family:'Liberation Sans', sans-serif;">Annotation</div>
<div style="position:absolute;left:778px;top:124.5px;height:16px;line-height:16px;font-size:12px;color:#f0f0f0;white-space:pre;font-family:'Liberation Sans', sans-serif;">Layers</div>
<div style="position:absolute;left:997px;top:124.5px;height:16px;line-height:16px;font-size:12px;color:#f0f0f0;white-space:pre;font-family:'Liberation Sans', sans-serif;">Block</div>
<div style="position:absolute;left:1192px;top:124.5px;height:16px;line-height:16px;font-size:12px;color:#f0f0f0;white-space:pre;font-family:'Liberation Sans', sans-serif;">Properties</div>
<div style="position:absolute;left:1372px;top:124.5px;height:16px;line-height:16px;font-size:12px;color:#f0f0f0;white-space:pre;font-family:'Liberation Sans', sans-serif;">Groups</div>
<div style="position:absolute;left:1454px;top:124.5px;height:16px;line-height:16px;font-size:12px;color:#f0f0f0;white-space:pre;font-family:'Liberation Sans', sans-serif;">Utilities</div>
<div style="position:absolute;left:1544px;top:124.5px;height:16px;line-height:16px;font-size:12px;color:#f0f0f0;white-space:pre;font-family:'Liberation Sans', sans-serif;">Clipboard</div>
<div style="position:absolute;left:1615px;top:124.5px;height:16px;line-height:16px;font-size:12px;color:#f0f0f0;white-space:pre;font-family:'Liberation Sans', sans-serif;">View</div>
<div style="position:absolute;left:12px;top:86.5px;height:16px;line-height:16px;font-size:12px;color:#f0f0f0;white-space:pre;font-family:'Liberation Sans', sans-serif;">Line</div>
<div style="position:absolute;left:45px;top:86.5px;height:16px;line-height:16px;font-size:12px;color:#f0f0f0;white-space:pre;font-family:'Liberation Sans', sans-serif;">Polyline</div>
<div style="position:absolute;left:101px;top:86.5px;height:16px;line-height:16px;font-size:12px;color:#f0f0f0;white-space:pre;font-family:'Liberation Sans', sans-serif;">Circle</div>
<div style="position:absolute;left:153px;top:86.5px;height:16px;line-height:16px;font-size:12px;color:#f0f0f0;white-space:pre;font-family:'Liberation Sans', sans-serif;">Arc</div>
<div style="position:absolute;left:254px;top:52.7px;height:16px;line-height:16px;font-size:12px;color:#f0f0f0;white-space:pre;font-family:'Liberation Sans', sans-serif;">Move</div>
<div style="position:absolute;left:326px;top:52.7px;height:16px;line-height:16px;font-size:12px;color:#f0f0f0;white-space:pre;font-family:'Liberation Sans', sans-serif;">Rotate</div>
<div style="position:absolute;left:395px;top:52.7px;height:16px;line-height:16px;font-size:12px;color:#f0f0f0;white-space:pre;font-family:'Liberation Sans', sans-serif;">Trim</div>
<div style="position:absolute;left:254px;top:77.3px;height:16px;line-height:16px;font-size:12px;color:#f0f0f0;white-space:pre;font-family:'Liberation Sans', sans-serif;">Copy</div>
<div style="position:absolute;left:326px;top:77.3px;height:16px;line-height:16px;font-size:12px;color:#f0f0f0;white-space:pre;font-family:'Liberation Sans', sans-serif;">Mirror</div>
<div style="position:absolute;left:395px;top:77.3px;height:16px;line-height:16px;font-size:12px;color:#f0f0f0;white-space:pre;font-family:'Liberation Sans', sans-serif;">Fillet</div>
<div style="position:absolute;left:254px;top:100.7px;height:16px;line-height:16px;font-size:12px;color:#f0f0f0;white-space:pre;font-family:'Liberation Sans', sans-serif;">Stretch</div>
<div style="position:absolute;left:326px;top:100.7px;height:16px;line-height:16px;font-size:12px;color:#f0f0f0;white-space:pre;font-family:'Liberation Sans', sans-serif;">Scale</div>
<div style="position:absolute;left:395px;top:100.7px;height:16px;line-height:16px;font-size:12px;color:#f0f0f0;white-space:pre;font-family:'Liberation Sans', sans-serif;">Array</div>
<div style="position:absolute;left:490px;top:86.5px;height:16px;line-height:16px;font-size:12px;color:#f0f0f0;white-space:pre;font-family:'Liberation Sans', sans-serif;">Text</div>
<div style="position:absolute;left:524.6px;top:86.5px;height:16px;line-height:16px;font-size:12px;color:#f0f0f0;white-space:pre;font-family:'Liberation Sans', sans-serif;">Dimension</div>
<div style="position:absolute;left:610px;top:53.0px;height:16px;line-height:16px;font-size:12px;color:#f0f0f0;white-space:pre;font-family:'Liberation Sans', sans-serif;">Linear</div>
<div style="position:absolute;left:610px;top:77.3px;height:16px;line-height:16px;font-size:12px;color:#f0f0f0;white-space:pre;font-family:'Liberation Sans', sans-serif;">Leader</div>
<div style="position:absolute;left:610px;top:101.0px;height:16px;line-height:16px;font-size:12px;color:#f0f0f0;white-space:pre;font-family:'Liberation Sans', sans-serif;">Table</div>
<div style="position:absolute;left:597.0px;top:87.5px;width:200px;text-align:center;height:16px;line-height:16px;font-size:12px;color:#f0f0f0;white-space:pre;">Layer</div>
<div style="position:absolute;left:597.0px;top:102.0px;width:200px;text-align:center;height:16px;line-height:16px;font-size:12px;color:#f0f0f0;white-space:pre;">Properties</div>
<div style="position:absolute;left:808px;top:53.0px;height:16px;line-height:16px;font-size:12px;color:#d3e8f7;white-space:pre;font-family:'Liberation Sans', sans-serif;">0</div>
<div style="position:absolute;left:848px;top:76.5px;height:16px;line-height:16px;font-size:12px;color:#f0f0f0;white-space:pre;font-family:'Liberation Sans', sans-serif;">Make Current</div>
<div style="position:absolute;left:848px;top:101.0px;height:16px;line-height:16px;font-size:12px;color:#f0f0f0;white-space:pre;font-family:'Liberation Sans', sans-serif;">Match Layer</div>
<div style="position:absolute;left:945.4px;top:86.0px;height:16px;line-height:16px;font-size:12px;color:#f0f0f0;white-space:pre;font-family:'Liberation Sans', sans-serif;">Insert</div>
<div style="position:absolute;left:1004.5px;top:53.0px;height:16px;line-height:16px;font-size:12px;color:#f0f0f0;white-space:pre;font-family:'Liberation Sans', sans-serif;">Create</div>
<div style="position:absolute;left:1004.5px;top:77.0px;height:16px;line-height:16px;font-size:12px;color:#f0f0f0;white-space:pre;font-family:'Liberation Sans', sans-serif;">Edit</div>
<div style="position:absolute;left:1004.5px;top:100.5px;height:16px;line-height:16px;font-size:12px;color:#f0f0f0;white-space:pre;font-family:'Liberation Sans', sans-serif;">Edit Attributes</div>
<div style="position:absolute;left:1031.0px;top:86.0px;width:200px;text-align:center;height:16px;line-height:16px;font-size:12px;color:#f0f0f0;white-space:pre;">Match</div>
<div style="position:absolute;left:1031.0px;top:102.0px;width:200px;text-align:center;height:16px;line-height:16px;font-size:12px;color:#f0f0f0;white-space:pre;">Properties</div>
<div style="position:absolute;left:1220px;top:53.0px;height:16px;line-height:16px;font-size:12px;color:#f0f0f0;white-space:pre;font-family:'Liberation Sans', sans-serif;">ByLayer</div>
<div style="position:absolute;left:1251px;top:76.0px;height:16px;line-height:16px;font-size:12px;color:#f0f0f0;white-space:pre;font-family:'Liberation Sans', sans-serif;">ByLayer</div>
<div style="position:absolute;left:1251px;top:100.0px;height:16px;line-height:16px;font-size:12px;color:#f0f0f0;white-space:pre;font-family:'Liberation Sans', sans-serif;">BYLAYER</div>
<div style="position:absolute;left:1369px;top:87.0px;height:16px;line-height:16px;font-size:12px;color:#f0f0f0;white-space:pre;font-family:'Liberation Sans', sans-serif;">Group</div>
<div style="position:absolute;left:1446px;top:87.0px;height:16px;line-height:16px;font-size:12px;color:#f0f0f0;white-space:pre;font-family:'Liberation Sans', sans-serif;">Measure</div>
<div style="position:absolute;left:1543px;top:87.0px;height:16px;line-height:16px;font-size:12px;color:#f0f0f0;white-space:pre;font-family:'Liberation Sans', sans-serif;">Paste</div>
<div style="position:absolute;left:1629px;top:87.0px;height:16px;line-height:16px;font-size:12px;color:#f0f0f0;white-space:pre;font-family:'Liberation Sans', sans-serif;">Base</div>
<div style="position:absolute;left:32px;top:150.5px;height:16px;line-height:16px;font-size:12px;color:#d6d6d6;white-space:pre;font-family:'Liberation Sans', sans-serif;">Start</div>
<div style="position:absolute;left:155px;top:150.5px;height:16px;line-height:16px;font-size:12px;color:#d6d6d6;white-space:pre;font-family:'Liberation Sans', sans-serif;">A3-001*</div>
<div style="position:absolute;left:278px;top:150.5px;height:16px;line-height:16px;font-size:12px;color:#d6d6d6;white-space:pre;font-family:'Liberation Sans', sans-serif;">A3-002*</div>
<div style="position:absolute;left:401px;top:150.5px;height:16px;line-height:16px;font-size:12px;color:#d6d6d6;white-space:pre;font-family:'Liberation Sans', sans-serif;">A3-003*</div>
<div style="position:absolute;left:524px;top:150.5px;height:16px;line-height:16px;font-size:12px;color:#d6d6d6;white-space:pre;font-family:'Liberation Sans', sans-serif;">A3-101 - A3-102 - A3-103*</div>
<div style="position:absolute;left:702px;top:150.5px;height:16px;line-height:16px;font-size:12px;color:#d6d6d6;white-space:pre;font-family:'Liberation Sans', sans-serif;">A3-104 - A3-105 - A3-106*</div>
<div style="position:absolute;left:880px;top:150.5px;height:16px;line-height:16px;font-size:12px;color:#d6d6d6;white-space:pre;font-family:'Liberation Sans', sans-serif;">A3-107*</div>
<div style="position:absolute;left:1003px;top:150.5px;height:16px;line-height:16px;font-size:12px;color:#d6d6d6;white-space:pre;font-family:'Liberation Sans', sans-serif;">A3-201*</div>
<div style="position:absolute;left:1126px;top:150.5px;height:16px;line-height:16px;font-size:12px;color:#d6d6d6;white-space:pre;font-family:'Liberation Sans', sans-serif;">A3-202*</div>
<div style="position:absolute;left:1249px;top:150.5px;height:16px;line-height:16px;font-size:12px;color:#d6d6d6;white-space:pre;font-family:'Liberation Sans', sans-serif;">A3-203*</div>
<div style="position:absolute;left:1372px;top:150.5px;height:16px;line-height:16px;font-size:12px;color:#d6d6d6;white-space:pre;font-family:'Liberation Sans', sans-serif;">A3-204*</div>
<div style="position:absolute;left:1495px;top:150.5px;height:16px;line-height:16px;font-size:12px;color:#d6d6d6;white-space:pre;font-family:'Liberation Sans', sans-serif;">A3-205*</div>
<div style="position:absolute;left:1618px;top:150.5px;height:16px;line-height:16px;font-size:12px;color:#d6d6d6;white-space:pre;font-family:'Liberation Sans', sans-serif;">A3-206*</div>
<div style="position:absolute;left:1741px;top:150.5px;height:16px;line-height:16px;font-size:12px;color:#f4f4f4;white-space:pre;font-family:'Liberation Sans', sans-serif;">A3-207*</div>
<div style="position:absolute;left:0px;top:173px;width:1919px;height:830px;background:#212830;"></div>
<div style="position:absolute;left:1912px;top:173px;width:7px;height:830px;background:#d5e1ee;"></div>
<svg width="1919" height="1027" style="position:absolute;left:0;top:0"><path d="M1851 190.5h9" stroke="#f2f2f2" stroke-width="2"/><rect x="1872" y="185" width="7" height="6" fill="none" stroke="#f2f2f2" stroke-width="1.6"/><path d="M1874 183h7v6" stroke="#f2f2f2" stroke-width="1.4" fill="none"/><path d="M1891 183l8 8M1899 183l-8 8" stroke="#f2f2f2" stroke-width="2"/><rect x="455.5" y="178.5" width="614" height="820" fill="none" stroke="#7c7c7c" stroke-width="1"/><path d="M20.5 932v49M21 981.5h50" stroke="#e8e8e8" stroke-width="1.1"/><rect x="16.5" y="977.5" width="9" height="9" fill="none" stroke="#e8e8e8" stroke-width="1.1"/><path d="M22 915l6 6 6-6M28 921v7" stroke="#e8e8e8" stroke-width="1.1" fill="none"/><path d="M75 968l12 12M87 968l-12 12" stroke="#e8e8e8" stroke-width="1.1"/></svg>
<div style="position:absolute;left:4px;top:179.0px;height:16px;line-height:16px;font-size:12px;color:#e4e4e4;white-space:pre;font-family:'Liberation Sans', sans-serif;">[−][Top][2D Wireframe]</div>
<svg width="1919" height="1027" style="position:absolute;left:0;top:0"><defs>
<pattern id="dots" width="4" height="3" patternUnits="userSpaceOnUse"><rect width="4" height="3" fill="#2a3038"/><rect x="0" y="0" width="1" height="1" fill="#c8c8c8"/><rect x="2" y="2" width="1" height="1" fill="#9a9a9a"/></pattern>
<pattern id="tx22e022" width="10" height="5" patternUnits="userSpaceOnUse"><path d="M0 0h1v1h-1zM1 0h1v1h-1zM2 0h1v1h-1zM4 0h1v1h-1zM5 0h1v1h-1zM6 0h1v1h-1zM8 0h1v1h-1zM9 0h1v1h-1zM0 1h1v1h-1zM2 1h1v1h-1zM4 1h1v1h-1zM8 1h1v1h-1zM0 2h1v1h-1zM1 2h1v1h-1zM2 2h1v1h-1zM4 2h1v1h-1zM5 2h1v1h-1zM8 2h1v1h-1zM9 2h1v1h-1zM0 3h1v1h-1zM4 3h1v1h-1zM5 3h1v1h-1zM6 3h1v1h-1zM8 3h1v1h-1zM9 3h1v1h-1z" fill="#22e022"/></pattern>
<pattern id="tx2020f0" width="10" height="5" patternUnits="userSpaceOnUse"><path d="M0 0h1v1h-1zM1 0h1v1h-1zM2 0h1v1h-1zM4 0h1v1h-1zM5 0h1v1h-1zM6 0h1v1h-1zM8 0h1v1h-1zM9 0h1v1h-1zM0 1h1v1h-1zM2 1h1v1h-1zM4 1h1v1h-1zM8 1h1v1h-1zM0 2h1v1h-1zM1 2h1v1h-1zM2 2h1v1h-1zM4 2h1v1h-1zM5 2h1v1h-1zM8 2h1v1h-1zM9 2h1v1h-1zM0 3h1v1h-1zM4 3h1v1h-1zM5 3h1v1h-1zM6 3h1v1h-1zM8 3h1v1h-1zM9 3h1v1h-1z" fill="#2020f0"/></pattern>
<pattern id="txc07060" width="10" height="5" patternUnits="userSpaceOnUse"><path d="M0 0h1v1h-1zM1 0h1v1h-1zM2 0h1v1h-1zM4 0h1v1h-1zM5 0h1v1h-1zM6 0h1v1h-1zM8 0h1v1h-1zM9 0h1v1h-1zM0 1h1v1h-1zM2 1h1v1h-1zM4 1h1v1h-1zM8 1h1v1h-1zM0 2h1v1h-1zM1 2h1v1h-1zM2 2h1v1h-1zM4 2h1v1h-1zM5 2h1v1h-1zM8 2h1v1h-1zM9 2h1v1h-1zM0 3h1v1h-1zM4 3h1v1h-1zM5 3h1v1h-1zM6 3h1v1h-1zM8 3h1v1h-1zM9 3h1v1h-1z" fill="#c07060"/></pattern>
<pattern id="txf020f0" width="10" height="5" patternUnits="userSpaceOnUse"><path d="M0 0h1v1h-1zM1 0h1v1h-1zM2 0h1v1h-1zM4 0h1v1h-1zM5 0h1v1h-1zM6 0h1v1h-1zM8 0h1v1h-1zM9 0h1v1h-1zM0 1h1v1h-1zM2 1h1v1h-1zM4 1h1v1h-1zM8 1h1v1h-1zM0 2h1v1h-1zM1 2h1v1h-1zM2 2h1v1h-1zM4 2h1v1h-1zM5 2h1v1h-1zM8 2h1v1h-1zM9 2h1v1h-1zM0 3h1v1h-1zM4 3h1v1h-1zM5 3h1v1h-1zM6 3h1v1h-1zM8 3h1v1h-1zM9 3h1v1h-1z" fill="#f020f0"/></pattern>
<pattern id="yrail" width="2.5" height="4" patternUnits="userSpaceOnUse"><rect width="2.5" height="4" fill="#3a3a20"/><rect width="1" height="4" fill="#f0f020"/></pattern>
<pattern id="brh" width="3" height="3" patternUnits="userSpaceOnUse"><rect width="3" height="3" fill="#5a3028"/><path d="M0 3L3 0" stroke="#a05040" stroke-width="0.8"/></pattern>
</defs><path d="M587 287L587 798.5" stroke="#8a8a8a" stroke-width="1.3"/><path d="M613.5 252L613.5 361.5" stroke="#8a8a8a" stroke-width="1.1"/><path d="M570 287L629 287" stroke="#8c4a42" stroke-width="1" stroke-dasharray="6 2 1 2"/><path d="M587 287L596 287" stroke="#aaaaaa" stroke-width="1.2"/><circle cx="587" cy="287" r="1" fill="#22e022"/><path d="M570 361.5L629 361.5" stroke="#8c4a42" stroke-width="1" stroke-dasharray="6 2 1 2"/><path d="M587 361.5L596 361.5" stroke="#aaaaaa" stroke-width="1.2"/><circle cx="587" cy="361.5" r="1" fill="#22e022"/><path d="M570 429.4L629 429.4" stroke="#8c4a42" stroke-width="1" stroke-dasharray="6 2 1 2"/><path d="M587 429.4L596 429.4" stroke="#aaaaaa" stroke-width="1.2"/><circle cx="587" cy="429.4" r="1" fill="#22e022"/><path d="M570 496.8L629 496.8" stroke="#8c4a42" stroke-width="1" stroke-dasharray="6 2 1 2"/><path d="M587 496.8L596 496.8" stroke="#aaaaaa" stroke-width="1.2"/><circle cx="587" cy="496.8" r="1" fill="#22e022"/><path d="M570 564.6L629 564.6" stroke="#8c4a42" stroke-width="1" stroke-dasharray="6 2 1 2"/><path d="M587 564.6L596 564.6" stroke="#aaaaaa" stroke-width="1.2"/><circle cx="587" cy="564.6" r="1" fill="#22e022"/><path d="M570 632L629 632" stroke="#8c4a42" stroke-width="1" stroke-dasharray="6 2 1 2"/><path d="M587 632L596 632" stroke="#aaaaaa" stroke-width="1.2"/><circle cx="587" cy="632" r="1" fill="#22e022"/><path d="M570 721L629 721" stroke="#8c4a42" stroke-width="1" stroke-dasharray="6 2 1 2"/><path d="M587 721L596 721" stroke="#aaaaaa" stroke-width="1.2"/><circle cx="587" cy="721" r="1" fill="#22e022"/><path d="M570 798.5L629 798.5" stroke="#8c4a42" stroke-width="1" stroke-dasharray="6 2 1 2"/><path d="M587 798.5L596 798.5" stroke="#aaaaaa" stroke-width="1.2"/><circle cx="587" cy="798.5" r="1" fill="#22e022"/><path d="M613.5 252L621 252" stroke="#8a8a8a" stroke-width="1"/><path d="M613.5 287L621 287" stroke="#8a8a8a" stroke-width="1"/><path d="M613.5 293L621 293" stroke="#8a8a8a" stroke-width="1"/><path d="M613.5 361.5L621 361.5" stroke="#8a8a8a" stroke-width="1"/><rect x="582" y="318" width="4" height="10" fill="url(#tx22e022)" opacity="0.8"/><rect x="582" y="390" width="4" height="10" fill="url(#tx22e022)" opacity="0.8"/><rect x="582" y="458" width="4" height="10" fill="url(#tx22e022)" opacity="0.8"/><rect x="582" y="525" width="4" height="10" fill="url(#tx22e022)" opacity="0.8"/><rect x="582" y="592" width="4" height="10" fill="url(#tx22e022)" opacity="0.8"/><rect x="582" y="671" width="4" height="10" fill="url(#tx22e022)" opacity="0.8"/><rect x="582" y="755" width="4" height="10" fill="url(#tx22e022)" opacity="0.8"/><rect x="609" y="261" width="4" height="11" fill="url(#tx22e022)" opacity="0.8"/><rect x="609" y="284" width="4" height="11" fill="url(#tx22e022)" opacity="0.8"/><rect x="609" y="321" width="4" height="11" fill="url(#tx22e022)" opacity="0.8"/><path d="M572 277L578 284L584 277" stroke="#22e022" stroke-width="1" fill="none"/><path d="M574 279h8l-4 3z" stroke="#2020f0" stroke-width="0.5" fill="#2020f0"/><path d="M572 277L584 277" stroke="#22e022" stroke-width="1"/><rect x="572" y="270" width="12" height="5" fill="url(#tx22e022)" opacity="0.8"/><rect x="570" y="266" width="16" height="4" fill="url(#tx2020f0)" opacity="0.9"/><path d="M572 352L578 359L584 352" stroke="#22e022" stroke-width="1" fill="none"/><path d="M574 354h8l-4 3z" stroke="#2020f0" stroke-width="0.5" fill="#2020f0"/><path d="M572 352L584 352" stroke="#22e022" stroke-width="1"/><rect x="572" y="345" width="12" height="5" fill="url(#tx22e022)" opacity="0.8"/><rect x="570" y="341" width="16" height="4" fill="url(#tx2020f0)" opacity="0.9"/><path d="M572 420L578 427L584 420" stroke="#22e022" stroke-width="1" fill="none"/><path d="M574 422h8l-4 3z" stroke="#2020f0" stroke-width="0.5" fill="#2020f0"/><path d="M572 420L584 420" stroke="#22e022" stroke-width="1"/><rect x="572" y="413" width="12" height="5" fill="url(#tx22e022)" opacity="0.8"/><rect x="570" y="409" width="16" height="4" fill="url(#tx2020f0)" opacity="0.9"/><path d="M572 487L578 494L584 487" stroke="#22e022" stroke-width="1" fill="none"/><path d="M574 489h8l-4 3z" stroke="#2020f0" stroke-width="0.5" fill="#2020f0"/><path d="M572 487L584 487" stroke="#22e022" stroke-width="1"/><rect x="572" y="480" width="12" height="5" fill="url(#tx22e022)" opacity="0.8"/><rect x="570" y="476" width="16" height="4" fill="url(#tx2020f0)" opacity="0.9"/><path d="M572 555L578 562L584 555" stroke="#22e022" stroke-width="1" fill="none"/><path d="M574 557h8l-4 3z" stroke="#2020f0" stroke-width="0.5" fill="#2020f0"/><path d="M572 555L584 555" stroke="#22e022" stroke-width="1"/><rect x="572" y="548" width="12" height="5" fill="url(#tx22e022)" opacity="0.8"/><rect x="570" y="544" width="16" height="4" fill="url(#tx2020f0)" opacity="0.9"/><path d="M572 622L578 629L584 622" stroke="#22e022" stroke-width="1" fill="none"/><path d="M574 624h8l-4 3z" stroke="#2020f0" stroke-width="0.5" fill="#2020f0"/><path d="M572 622L584 622" stroke="#22e022" stroke-width="1"/><rect x="572" y="615" width="12" height="5" fill="url(#tx22e022)" opacity="0.8"/><rect x="570" y="611" width="16" height="4" fill="url(#tx2020f0)" opacity="0.9"/><path d="M572 711L578 718L584 711" stroke="#22e022" stroke-width="1" fill="none"/><path d="M574 713h8l-4 3z" stroke="#2020f0" stroke-width="0.5" fill="#2020f0"/><path d="M572 711L584 711" stroke="#22e022" stroke-width="1"/><rect x="572" y="704" width="12" height="5" fill="url(#tx22e022)" opacity="0.8"/><rect x="570" y="700" width="16" height="4" fill="url(#tx2020f0)" opacity="0.9"/><path d="M572 789L578 796L584 789" stroke="#22e022" stroke-width="1" fill="none"/><path d="M574 791h8l-4 3z" stroke="#2020f0" stroke-width="0.5" fill="#2020f0"/><path d="M572 789L584 789" stroke="#22e022" stroke-width="1"/><rect x="572" y="782" width="12" height="5" fill="url(#tx22e022)" opacity="0.8"/><rect x="570" y="778" width="16" height="4" fill="url(#tx2020f0)" opacity="0.9"/><path d="M629 246L629 820" stroke="#2020f0" stroke-width="1.6" stroke-dasharray="3 2"/><path d="M675.5 250L675.5 912" stroke="#8c4a42" stroke-width="1" stroke-dasharray="6 2 1 2"/><path d="M723 240L723 912" stroke="#8c4a42" stroke-width="1" stroke-dasharray="6 2 1 2"/><path d="M761.5 240L761.5 372" stroke="#8c4a42" stroke-width="1" stroke-dasharray="6 2 1 2"/><path d="M806.5 620L806.5 912" stroke="#8c4a42" stroke-width="1" stroke-dasharray="6 2 1 2"/><path d="M848.7 600L848.7 912" stroke="#8c4a42" stroke-width="1" stroke-dasharray="6 2 1 2"/><path d="M890.5 700L890.5 912" stroke="#8c4a42" stroke-width="1" stroke-dasharray="6 2 1 2"/><path d="M933.5 700L933.5 912" stroke="#8c4a42" stroke-width="1" stroke-dasharray="6 2 1 2"/><path d="M974.5 700L974.5 912" stroke="#8c4a42" stroke-width="1" stroke-dasharray="6 2 1 2"/><path d="M680 240L762 240" stroke="#8a8a8a" stroke-width="1.2"/><circle cx="680" cy="240" r="1.2" fill="#22e022"/><circle cx="723" cy="240" r="1.2" fill="#22e022"/><circle cx="762" cy="240" r="1.2" fill="#22e022"/><rect x="697" y="236" width="10" height="3" fill="url(#tx22e022)" opacity="0.9"/><rect x="736" y="236" width="10" height="3" fill="url(#tx22e022)" opacity="0.9"/><path d="M680.5 240L680.5 262" stroke="#8a8a8a" stroke-width="1"/><path d="M613 251.6L677 251.6" stroke="#8c4a42" stroke-width="1" stroke-dasharray="6 2 1 2"/><rect x="673.5" y="252.5" width="8.5" height="10" fill="#7a7a7a" stroke="#2020f0" stroke-width="1"/><rect x="673.5" y="262" width="6.5" height="28" fill="url(#brh)" stroke="#e01818" stroke-width="0.8"/><rect x="671.8" y="290" width="6.2" height="10" fill="#7a7a7a" stroke="none" stroke-width="1"/><path d="M678.5 290L678.5 300" stroke="#2020f0" stroke-width="1"/><rect x="629" y="288" width="43" height="4" fill="#8a8a8a" stroke="none" stroke-width="1"/><path d="M629 291.5L672 291.5" stroke="#2020f0" stroke-width="0.8"/><path d="M629 302H692.3L716.8 329.5" stroke="#8a8a8a" stroke-width="1.6" fill="none"/><path d="M637.5 302L637.5 361.5" stroke="#8a8a8a" stroke-width="1"/><path d="M680 256.6L766.6 358.9" stroke="#8c4a42" stroke-width="1.4" fill="none"/><path d="M683 255L769 357" stroke="#8a8a8a" stroke-width="0.8" fill="none"/><path d="M677 271L750 359" stroke="#f0f020" stroke-width="1.5" fill="none"/><path d="M680 264L757 355" stroke="#f0f020" stroke-width="1.3" fill="none"/><path d="M684 262L763 357" stroke="#f0f020" stroke-width="1.1" fill="none"/><circle cx="681" cy="266" r="1.3" fill="#f4f4f4"/><circle cx="699" cy="288" r="1.3" fill="#f4f4f4"/><circle cx="753.6" cy="354" r="1.5" fill="#f4f4f4"/><path d="M725 334.3L749.6 358.2" stroke="#8a8a8a" stroke-width="1.2" fill="none"/><rect x="678.6" y="336.4" width="4.5" height="36.8" fill="url(#brh)" stroke="#e01818" stroke-width="0.8"/><path d="M683 336L692 336" stroke="#8a8a8a" stroke-width="1"/><path d="M692 336L692 362" stroke="#8a8a8a" stroke-width="1"/><rect x="719" y="328" width="6" height="8.4" fill="#8a8a8a" stroke="#e01818" stroke-width="0.6"/><path d="M718.5 329L718.5 366" stroke="#22e022" stroke-width="1.1"/><path d="M722 336L722 363" stroke="#f020f0" stroke-width="3"/><path d="M725.5 336L725.5 363" stroke="#22e022" stroke-width="1"/><rect x="718" y="363" width="6" height="13" fill="none" stroke="#e01818" stroke-width="1.2"/><path d="M722.5 378L722.5 428" stroke="#f020f0" stroke-width="2"/><path d="M629 362L680 362" stroke="#e01818" stroke-width="1.2"/><path d="M629 365L680 365" stroke="#2020f0" stroke-width="1"/><rect x="629" y="362" width="50" height="3" fill="url(#dots)" stroke="none" stroke-width="1"/><path d="M682 362.3L718 362.3" stroke="#22e022" stroke-width="1.1"/><path d="M629 373.2L718 373.2" stroke="#22e022" stroke-width="1.2"/><path d="M665 265L672 272" stroke="#8c4a42" stroke-width="1" fill="none"/><path d="M725 373.2L761.5 373.2" stroke="#8a8a8a" stroke-width="1.1"/><path d="M700 282L785 282" stroke="#c07060" stroke-width="1"/><rect x="786" y="279" width="9" height="5" fill="url(#tx22e022)" opacity="0.9"/><rect x="797" y="278" width="10" height="7" fill="none" stroke="#f0f020" stroke-width="1.2"/><path d="M706 318a8 8 0 0 1 8-8h54a8 8 0 0 1 8 8v51a8 8 0 0 1-8 8h-54a8 8 0 0 1-8-8z" stroke="#2020f0" stroke-width="1.4" fill="none" stroke-dasharray="2.5 1.5"/><path d="M776 310L782 299H787" stroke="#2020f0" stroke-width="1.2" fill="none"/><circle cx="794.5" cy="299" r="7.5" fill="none" stroke="#2020f0" stroke-width="1.3"/><path d="M788 298L801 298" stroke="#f0f020" stroke-width="1"/><rect x="789" y="300" width="11" height="3" fill="url(#tx22e022)" opacity="0.9"/><path d="M762 361.5L800 361.5" stroke="#8c4a42" stroke-width="1" stroke-dasharray="6 2 1 2"/><path d="M785 353L791 360L797 353" stroke="#22e022" stroke-width="1" fill="none"/><path d="M787 355h8l-4 3z" stroke="#2020f0" stroke-width="0.5" fill="#2020f0"/><path d="M785 353L797 353" stroke="#22e022" stroke-width="1"/><rect x="785" y="346" width="12" height="5" fill="url(#tx22e022)" opacity="0.8"/><rect x="786" y="348" width="18" height="4" fill="url(#tx2020f0)" opacity="0.9"/><rect x="631" y="263" width="17" height="5" fill="url(#tx22e022)" opacity="0.9"/><rect x="648" y="268" width="11" height="5" fill="none" stroke="#f0f020" stroke-width="1"/><rect x="632" y="269" width="15" height="3" fill="url(#tx22e022)" opacity="0.9"/><path d="M652 262L678 270" stroke="#c07060" stroke-width="0.8"/><rect x="639" y="278" width="7" height="4" fill="url(#txc07060)" opacity="0.9"/><rect x="651" y="277" width="13" height="4" fill="url(#tx2020f0)" opacity="0.9"/><path d="M647.5 279L653.5 286L659.5 279" stroke="#22e022" stroke-width="1" fill="none"/><path d="M649.5 281h8l-4 3z" stroke="#2020f0" stroke-width="0.5" fill="#2020f0"/><path d="M647.5 279L659.5 279" stroke="#22e022" stroke-width="1"/><rect x="647.5" y="272" width="12" height="5" fill="url(#tx22e022)" opacity="0.8"/><path d="M647.5 302L653.5 309L659.5 302" stroke="#22e022" stroke-width="1" fill="none"/><path d="M649.5 304h8l-4 3z" stroke="#2020f0" stroke-width="0.5" fill="#2020f0"/><path d="M647.5 302L659.5 302" stroke="#22e022" stroke-width="1"/><rect x="647.5" y="295" width="12" height="5" fill="url(#tx22e022)" opacity="0.8"/><rect x="642" y="309" width="16" height="9" fill="url(#tx22e022)" opacity="0.8"/><rect x="640" y="341" width="26" height="9" fill="url(#tx22e022)" opacity="0.9"/><path d="M648 353.7L654 360.7L660 353.7" stroke="#22e022" stroke-width="1" fill="none"/><path d="M650 355.7h8l-4 3z" stroke="#2020f0" stroke-width="0.5" fill="#2020f0"/><path d="M648 353.7L660 353.7" stroke="#22e022" stroke-width="1"/><rect x="648" y="346.7" width="12" height="5" fill="url(#tx22e022)" opacity="0.8"/><rect x="641" y="372" width="18" height="7" fill="url(#tx22e022)" opacity="0.9"/><path d="M651 347L651 356" stroke="#22e022" stroke-width="1"/><rect x="786" y="379" width="43" height="5" fill="url(#tx22e022)" opacity="0.9"/><rect x="828" y="377" width="10" height="8" fill="none" stroke="#f0f020" stroke-width="1.1"/><path d="M725 379L786 379" stroke="#8c4a42" stroke-width="1"/><path d="M714 372.7L714 798.5" stroke="#22e022" stroke-width="1.2"/><path d="M725 437L725 798.5" stroke="#22e022" stroke-width="1.2"/><path d="M780.6 404L780.6 634" stroke="#8a8a8a" stroke-width="1.3"/><rect x="629" y="429.4" width="141" height="4.5" fill="url(#dots)" stroke="none" stroke-width="1"/><path d="M629 429.9L770 429.9" stroke="#e01818" stroke-width="1.3"/><path d="M629 433.4L770 433.4" stroke="#2020f0" stroke-width="1.3"/><path d="M629 429.4L770 429.4" stroke="#e01818" stroke-width="1.3"/><rect x="713" y="433.9" width="11" height="13.5" fill="url(#dots)" stroke="#2020f0" stroke-width="1.2"/><rect x="745" y="433.9" width="10" height="10.5" fill="url(#dots)" stroke="#2020f0" stroke-width="1.2"/><path d="M629 440.4L713 440.4" stroke="#22e022" stroke-width="1.2"/><path d="M713 447.4L745 447.4" stroke="#22e022" stroke-width="1.2"/><path d="M669.5 420.4L675.5 427.4L681.5 420.4" stroke="#22e022" stroke-width="1" fill="none"/><path d="M671.5 422.4h8l-4 3z" stroke="#2020f0" stroke-width="0.5" fill="#2020f0"/><path d="M669.5 420.4L681.5 420.4" stroke="#22e022" stroke-width="1"/><rect x="669.5" y="413.4" width="12" height="5" fill="url(#tx22e022)" opacity="0.8"/><rect x="664" y="407.4" width="24" height="9" fill="url(#tx22e022)" opacity="0.9"/><rect x="665" y="436.4" width="24" height="7" fill="url(#tx22e022)" opacity="0.9"/><rect x="717" y="452.4" width="22" height="4" fill="url(#tx22e022)" opacity="0.9"/><path d="M739 448.4l5-3 5 3z" fill="#2020f0" stroke="#22e022" stroke-width="0.6"/><rect x="629" y="496.8" width="141" height="4.5" fill="url(#dots)" stroke="none" stroke-width="1"/><path d="M629 497.3L770 497.3" stroke="#e01818" stroke-width="1.3"/><path d="M629 500.8L770 500.8" stroke="#2020f0" stroke-width="1.3"/><path d="M629 496.8L770 496.8" stroke="#e01818" stroke-width="1.3"/><rect x="713" y="501.3" width="11" height="13.499999999999943" fill="url(#dots)" stroke="#2020f0" stroke-width="1.2"/><rect x="745" y="501.3" width="10" height="10.5" fill="url(#dots)" stroke="#2020f0" stroke-width="1.2"/><path d="M629 507.8L713 507.8" stroke="#22e022" stroke-width="1.2"/><path d="M713 514.8L745 514.8" stroke="#22e022" stroke-width="1.2"/><path d="M669.5 487.8L675.5 494.8L681.5 487.8" stroke="#22e022" stroke-width="1" fill="none"/><path d="M671.5 489.8h8l-4 3z" stroke="#2020f0" stroke-width="0.5" fill="#2020f0"/><path d="M669.5 487.8L681.5 487.8" stroke="#22e022" stroke-width="1"/><rect x="669.5" y="480.8" width="12" height="5" fill="url(#tx22e022)" opacity="0.8"/><rect x="664" y="474.8" width="24" height="9" fill="url(#tx22e022)" opacity="0.9"/><rect x="665" y="503.8" width="24" height="7" fill="url(#tx22e022)" opacity="0.9"/><rect x="717" y="519.8" width="22" height="4" fill="url(#tx22e022)" opacity="0.9"/><path d="M739 515.8l5-3 5 3z" fill="#2020f0" stroke="#22e022" stroke-width="0.6"/><rect x="629" y="564.6" width="141" height="4.5" fill="url(#dots)" stroke="none" stroke-width="1"/><path d="M629 565.1L770 565.1" stroke="#e01818" stroke-width="1.3"/><path d="M629 568.6L770 568.6" stroke="#2020f0" stroke-width="1.3"/><path d="M629 564.6L770 564.6" stroke="#e01818" stroke-width="1.3"/><rect x="713" y="569.1" width="11" height="13.5" fill="url(#dots)" stroke="#2020f0" stroke-width="1.2"/><rect x="745" y="569.1" width="10" height="10.5" fill="url(#dots)" stroke="#2020f0" stroke-width="1.2"/><path d="M629 575.6L713 575.6" stroke="#22e022" stroke-width="1.2"/><path d="M713 582.6L745 582.6" stroke="#22e022" stroke-width="1.2"/><path d="M669.5 555.6L675.5 562.6L681.5 555.6" stroke="#22e022" stroke-width="1" fill="none"/><path d="M671.5 557.6h8l-4 3z" stroke="#2020f0" stroke-width="0.5" fill="#2020f0"/><path d="M669.5 555.6L681.5 555.6" stroke="#22e022" stroke-width="1"/><rect x="669.5" y="548.6" width="12" height="5" fill="url(#tx22e022)" opacity="0.8"/><rect x="664" y="542.6" width="24" height="9" fill="url(#tx22e022)" opacity="0.9"/><rect x="665" y="571.6" width="24" height="7" fill="url(#tx22e022)" opacity="0.9"/><rect x="717" y="587.6" width="22" height="4" fill="url(#tx22e022)" opacity="0.9"/><path d="M739 583.6l5-3 5 3z" fill="#2020f0" stroke="#22e022" stroke-width="0.6"/><rect x="629" y="632" width="141" height="4.5" fill="url(#dots)" stroke="none" stroke-width="1"/><path d="M629 632.5L770 632.5" stroke="#e01818" stroke-width="1.3"/><path d="M629 636.0L770 636.0" stroke="#2020f0" stroke-width="1.3"/><path d="M629 632L770 632" stroke="#e01818" stroke-width="1.3"/><rect x="713" y="636.5" width="11" height="13.5" fill="url(#dots)" stroke="#2020f0" stroke-width="1.2"/><rect x="745" y="636.5" width="10" height="10.5" fill="url(#dots)" stroke="#2020f0" stroke-width="1.2"/><path d="M629 643L713 643" stroke="#22e022" stroke-width="1.2"/><path d="M713 650L745 650" stroke="#22e022" stroke-width="1.2"/><path d="M669.5 623L675.5 630L681.5 623" stroke="#22e022" stroke-width="1" fill="none"/><path d="M671.5 625h8l-4 3z" stroke="#2020f0" stroke-width="0.5" fill="#2020f0"/><path d="M669.5 623L681.5 623" stroke="#22e022" stroke-width="1"/><rect x="669.5" y="616" width="12" height="5" fill="url(#tx22e022)" opacity="0.8"/><rect x="664" y="610" width="24" height="9" fill="url(#tx22e022)" opacity="0.9"/><rect x="665" y="639" width="24" height="7" fill="url(#tx22e022)" opacity="0.9"/><rect x="717" y="655" width="22" height="4" fill="url(#tx22e022)" opacity="0.9"/><path d="M739 651l5-3 5 3z" fill="#2020f0" stroke="#22e022" stroke-width="0.6"/><path d="M629 655.4L745 655.4" stroke="#22e022" stroke-width="1.4"/><rect x="745" y="404" width="25" height="22" fill="url(#yrail)" stroke="#f0f020" stroke-width="1"/><rect x="747" y="418" width="18" height="5" fill="url(#tx22e022)" opacity="0.85"/><path d="M770 404.5L780.6 404.5" stroke="#8a8a8a" stroke-width="1.2"/><path d="M770 426.5L780.6 426.5" stroke="#8a8a8a" stroke-width="1.2"/><rect x="745" y="472" width="25" height="22" fill="url(#yrail)" stroke="#f0f020" stroke-width="1"/><rect x="747" y="486" width="18" height="5" fill="url(#tx22e022)" opacity="0.85"/><path d="M770 472.5L780.6 472.5" stroke="#8a8a8a" stroke-width="1.2"/><path d="M770 494.5L780.6 494.5" stroke="#8a8a8a" stroke-width="1.2"/><rect x="745" y="540" width="25" height="22" fill="url(#yrail)" stroke="#f0f020" stroke-width="1"/><rect x="747" y="554" width="18" height="5" fill="url(#tx22e022)" opacity="0.85"/><path d="M770 540.5L780.6 540.5" stroke="#8a8a8a" stroke-width="1.2"/><path d="M770 562.5L780.6 562.5" stroke="#8a8a8a" stroke-width="1.2"/><rect x="745" y="607.5" width="25" height="22" fill="url(#yrail)" stroke="#f0f020" stroke-width="1"/><rect x="747" y="621.5" width="18" height="5" fill="url(#tx22e022)" opacity="0.85"/><path d="M770 608.0L780.6 608.0" stroke="#8a8a8a" stroke-width="1.2"/><path d="M770 630.0L780.6 630.0" stroke="#8a8a8a" stroke-width="1.2"/><path d="M749 506L773 506" stroke="#f4f4f4" stroke-width="1.6" stroke-dasharray="2 1"/><path d="M749 574L773 574" stroke="#f4f4f4" stroke-width="1.6" stroke-dasharray="2 1"/><path d="M745 452L745 498" stroke="#f020f0" stroke-width="1.8"/><path d="M745 505L745 565" stroke="#f020f0" stroke-width="1.8"/><path d="M745 575L745 632" stroke="#f020f0" stroke-width="1.8"/><path d="M725 398L770 398" stroke="#8a8a8a" stroke-width="1"/><path d="M725 466L770 466" stroke="#8a8a8a" stroke-width="1"/><path d="M780 404.4L856 404.4" stroke="#8c4a42" stroke-width="1" stroke-dasharray="6 2 1 2"/><path d="M842 394.4L848 401.4L854 394.4" stroke="#22e022" stroke-width="1" fill="none"/><path d="M844 396.4h8l-4 3z" stroke="#2020f0" stroke-width="0.5" fill="#2020f0"/><path d="M842 394.4L854 394.4" stroke="#22e022" stroke-width="1"/><rect x="842" y="387.4" width="12" height="5" fill="url(#tx22e022)" opacity="0.8"/><path d="M780 434L856 434" stroke="#8c4a42" stroke-width="1" stroke-dasharray="6 2 1 2"/><path d="M842 424L848 431L854 424" stroke="#22e022" stroke-width="1" fill="none"/><path d="M844 426h8l-4 3z" stroke="#2020f0" stroke-width="0.5" fill="#2020f0"/><path d="M842 424L854 424" stroke="#22e022" stroke-width="1"/><rect x="842" y="417" width="12" height="5" fill="url(#tx22e022)" opacity="0.8"/><path d="M780 472L856 472" stroke="#8c4a42" stroke-width="1" stroke-dasharray="6 2 1 2"/><path d="M842 462L848 469L854 462" stroke="#22e022" stroke-width="1" fill="none"/><path d="M844 464h8l-4 3z" stroke="#2020f0" stroke-width="0.5" fill="#2020f0"/><path d="M842 462L854 462" stroke="#22e022" stroke-width="1"/><rect x="842" y="455" width="12" height="5" fill="url(#tx22e022)" opacity="0.8"/><path d="M780 502L856 502" stroke="#8c4a42" stroke-width="1" stroke-dasharray="6 2 1 2"/><path d="M842 492L848 499L854 492" stroke="#22e022" stroke-width="1" fill="none"/><path d="M844 494h8l-4 3z" stroke="#2020f0" stroke-width="0.5" fill="#2020f0"/><path d="M842 492L854 492" stroke="#22e022" stroke-width="1"/><rect x="842" y="485" width="12" height="5" fill="url(#tx22e022)" opacity="0.8"/><path d="M780 540L856 540" stroke="#8c4a42" stroke-width="1" stroke-dasharray="6 2 1 2"/><path d="M842 530L848 537L854 530" stroke="#22e022" stroke-width="1" fill="none"/><path d="M844 532h8l-4 3z" stroke="#2020f0" stroke-width="0.5" fill="#2020f0"/><path d="M842 530L854 530" stroke="#22e022" stroke-width="1"/><rect x="842" y="523" width="12" height="5" fill="url(#tx22e022)" opacity="0.8"/><path d="M780 569.6L856 569.6" stroke="#8c4a42" stroke-width="1" stroke-dasharray="6 2 1 2"/><path d="M842 559.6L848 566.6L854 559.6" stroke="#22e022" stroke-width="1" fill="none"/><path d="M844 561.6h8l-4 3z" stroke="#2020f0" stroke-width="0.5" fill="#2020f0"/><path d="M842 559.6L854 559.6" stroke="#22e022" stroke-width="1"/><rect x="842" y="552.6" width="12" height="5" fill="url(#tx22e022)" opacity="0.8"/><path d="M780 607.5L856 607.5" stroke="#8c4a42" stroke-width="1" stroke-dasharray="6 2 1 2"/><path d="M842 597.5L848 604.5L854 597.5" stroke="#22e022" stroke-width="1" fill="none"/><path d="M844 599.5h8l-4 3z" stroke="#2020f0" stroke-width="0.5" fill="#2020f0"/><path d="M842 597.5L854 597.5" stroke="#22e022" stroke-width="1"/><rect x="842" y="590.5" width="12" height="5" fill="url(#tx22e022)" opacity="0.8"/><rect x="778" y="415" width="4" height="10" fill="url(#tx22e022)" opacity="0.9"/><rect x="778" y="447" width="4" height="10" fill="url(#tx22e022)" opacity="0.9"/><rect x="778" y="485" width="4" height="10" fill="url(#tx22e022)" opacity="0.9"/><rect x="778" y="515" width="4" height="10" fill="url(#tx22e022)" opacity="0.9"/><rect x="778" y="555" width="4" height="10" fill="url(#tx22e022)" opacity="0.9"/><rect x="778" y="585" width="4" height="10" fill="url(#tx22e022)" opacity="0.9"/><rect x="778" y="615" width="4" height="10" fill="url(#tx22e022)" opacity="0.9"/><rect x="786" y="387" width="38" height="4" fill="url(#tx22e022)" opacity="0.9"/><rect x="786" y="392" width="14" height="4" fill="url(#tx22e022)" opacity="0.9"/><rect x="801" y="391" width="10" height="6" fill="none" stroke="#f0f020" stroke-width="1"/><rect x="786" y="397" width="18" height="4" fill="url(#tx22e022)" opacity="0.9"/><rect x="801" y="396" width="10" height="6" fill="none" stroke="#f0f020" stroke-width="1"/><rect x="786" y="402" width="14" height="4" fill="url(#tx22e022)" opacity="0.9"/><rect x="801" y="401" width="10" height="6" fill="none" stroke="#f0f020" stroke-width="1"/><rect x="793" y="426" width="34" height="4" fill="url(#tx22e022)" opacity="0.9"/><rect x="793" y="438" width="26" height="4" fill="url(#tx22e022)" opacity="0.9"/><rect x="827" y="437" width="10" height="6" fill="none" stroke="#f0f020" stroke-width="1"/><rect x="786" y="450" width="40" height="4" fill="url(#tx22e022)" opacity="0.9"/><rect x="827" y="449" width="10" height="6" fill="none" stroke="#f0f020" stroke-width="1"/><rect x="786" y="463" width="18" height="4" fill="url(#tx22e022)" opacity="0.9"/><rect x="809" y="462" width="10" height="6" fill="none" stroke="#f0f020" stroke-width="1"/><rect x="786" y="468" width="10" height="4" fill="url(#tx22e022)" opacity="0.9"/><rect x="809" y="467" width="10" height="6" fill="none" stroke="#f0f020" stroke-width="1"/><rect x="786" y="512" width="27" height="4" fill="url(#tx22e022)" opacity="0.9"/><rect x="786" y="517" width="24" height="4" fill="url(#tx22e022)" opacity="0.9"/><path d="M774 415L781 398H786" stroke="#8c4a42" stroke-width="1" fill="none"/><path d="M770 436L775 430H786" stroke="#8c4a42" stroke-width="1" fill="none"/><path d="M770 439L776 446H786" stroke="#8c4a42" stroke-width="1" fill="none"/><path d="M749 445L753 451H786" stroke="#8c4a42" stroke-width="1" fill="none"/><path d="M746 463L786 463" stroke="#8c4a42" stroke-width="1"/><path d="M749 510L786 515" stroke="#8c4a42" stroke-width="1" fill="none"/><rect x="745" y="650" width="127" height="3.5" fill="#f4f4f4" stroke="none" stroke-width="1"/><rect x="740" y="653.5" width="133" height="3.5" fill="url(#dots)" stroke="none" stroke-width="1"/><path d="M740 654.0L873 654.0" stroke="#2020f0" stroke-width="1.3"/><path d="M740 656.5L873 656.5" stroke="#e01818" stroke-width="1.3"/><rect x="847" y="657" width="8" height="10" fill="url(#dots)" stroke="#2020f0" stroke-width="1.2"/><rect x="740" y="637" width="6" height="20" fill="url(#dots)" stroke="#2020f0" stroke-width="1.2"/><rect x="805.5" y="657" width="3" height="83" fill="#5aa8d8" stroke="none" stroke-width="1"/><path d="M807 657L807 740" stroke="#f020f0" stroke-width="1.2" stroke-dasharray="1.5 2.5"/><path d="M805 657L805 740" stroke="#22e022" stroke-width="0.6"/><path d="M809 657L809 740" stroke="#22e022" stroke-width="0.6"/><path d="M795 663L795 722" stroke="#8a8a8a" stroke-width="1.2"/><path d="M795 664L805 664" stroke="#8a8a8a" stroke-width="1"/><path d="M795 721L805 721" stroke="#8a8a8a" stroke-width="1"/><path d="M748 640h52M752 640v9M766 640v9M782 640v9M798 640v9M748 645h50" stroke="#8a8a8a" stroke-width="0.9" fill="none" opacity="0.8"/><path d="M846.5 662L846.5 798.5" stroke="#22e022" stroke-width="1.2"/><path d="M854.5 672L854.5 798.5" stroke="#22e022" stroke-width="1.2"/><path d="M901 650L901 731" stroke="#8a8a8a" stroke-width="1.2"/><path d="M873 650L900 650" stroke="#8c4a42" stroke-width="1" stroke-dasharray="6 2 1 2"/><path d="M873 656.5L900 656.5" stroke="#8c4a42" stroke-width="1" stroke-dasharray="6 2 1 2"/><path d="M873 666.5L900 666.5" stroke="#8c4a42" stroke-width="1" stroke-dasharray="6 2 1 2"/><path d="M854 675L873 675" stroke="#8a8a8a" stroke-width="1"/><path d="M848 682L873 682" stroke="#8a8a8a" stroke-width="1"/><rect x="798" y="640" width="30" height="5" fill="url(#tx22e022)" opacity="0.9"/><rect x="826" y="626" width="24" height="4" fill="url(#tx22e022)" opacity="0.9"/><rect x="826" y="631" width="24" height="4" fill="url(#tx22e022)" opacity="0.9"/><rect x="828" y="639" width="10" height="7" fill="none" stroke="#f0f020" stroke-width="1.1"/><path d="M793 660L802 630H826" stroke="#8c4a42" stroke-width="1" fill="none"/><rect x="818" y="662" width="18" height="4" fill="url(#tx22e022)" opacity="0.9"/><rect x="820" y="668" width="10" height="6" fill="none" stroke="#f0f020" stroke-width="1"/><path d="M809 645L815 652L821 645" stroke="#22e022" stroke-width="1" fill="none"/><path d="M811 647h8l-4 3z" stroke="#2020f0" stroke-width="0.5" fill="#2020f0"/><path d="M809 645L821 645" stroke="#22e022" stroke-width="1"/><rect x="809" y="638" width="12" height="5" fill="url(#tx22e022)" opacity="0.8"/><path d="M839 645L845 652L851 645" stroke="#22e022" stroke-width="1" fill="none"/><path d="M841 647h8l-4 3z" stroke="#2020f0" stroke-width="0.5" fill="#2020f0"/><path d="M839 645L851 645" stroke="#22e022" stroke-width="1"/><rect x="839" y="638" width="12" height="5" fill="url(#tx22e022)" opacity="0.8"/><path d="M772 645a6 3 0 0 1 12 0M832 645a6 3 0 0 1 12 0" stroke="#20e0f0" stroke-width="1.2" fill="none"/><rect x="758" y="640" width="14" height="5" fill="url(#tx22e022)" opacity="0.6"/><rect x="629" y="721" width="97" height="4.5" fill="url(#dots)" stroke="none" stroke-width="1"/><path d="M629 721.5L726 721.5" stroke="#2020f0" stroke-width="1.3"/><path d="M629 725.0L726 725.0" stroke="#2020f0" stroke-width="1.3"/><path d="M629 721L726 721" stroke="#e01818" stroke-width="1"/><rect x="716" y="722" width="9" height="15" fill="url(#dots)" stroke="#2020f0" stroke-width="1.2"/><path d="M629 735.9L712 735.9" stroke="#22e022" stroke-width="1.2"/><rect x="725" y="727.5" width="123" height="4.0" fill="url(#dots)" stroke="none" stroke-width="1"/><path d="M725 728.0L848 728.0" stroke="#e01818" stroke-width="1.3"/><path d="M725 731.0L848 731.0" stroke="#2020f0" stroke-width="1.3"/><rect x="782" y="731" width="8" height="10" fill="url(#dots)" stroke="#2020f0" stroke-width="1.2"/><path d="M724 741.3L848 741.3" stroke="#22e022" stroke-width="1.2"/><rect x="848" y="731" width="72" height="4" fill="url(#dots)" stroke="none" stroke-width="1"/><path d="M848 731.5L920 731.5" stroke="#e01818" stroke-width="1.3"/><path d="M848 734.5L920 734.5" stroke="#2020f0" stroke-width="1.3"/><rect x="848" y="722" width="43" height="9" fill="url(#brh)" stroke="none" stroke-width="1"/><path d="M848 721.5L891 721.5" stroke="#22e022" stroke-width="1.2"/><path d="M891 729L920 729" stroke="#e01818" stroke-width="1.2"/><rect x="920" y="730" width="59" height="20" fill="url(#dots)" stroke="none" stroke-width="1"/><path d="M932 732h34l9 14h-43z" stroke="#aaa" stroke-width="0.6" fill="#8c8c8c"/><rect x="921" y="731" width="11" height="10" fill="none" stroke="#20e0f0" stroke-width="1.2"/><path d="M920 730.5L979 730.5" stroke="#20e0f0" stroke-width="1"/><path d="M932 748.5L979 748.5" stroke="#20e0f0" stroke-width="1"/><rect x="847" y="735" width="8" height="10" fill="url(#dots)" stroke="#2020f0" stroke-width="1.2"/><rect x="886" y="735" width="8" height="10" fill="url(#dots)" stroke="#2020f0" stroke-width="1.2"/><rect x="929" y="742" width="9" height="18" fill="url(#dots)" stroke="#2020f0" stroke-width="1.2"/><rect x="929" y="760" width="4" height="40" fill="url(#brh)" stroke="none" stroke-width="1"/><path d="M979 718L979 885" stroke="#2020f0" stroke-width="1.6" stroke-dasharray="3 2"/><path d="M900 745H910L916 751H930" stroke="#22e022" stroke-width="1.2" fill="none"/><path d="M888 735L888 798.5" stroke="#22e022" stroke-width="1.2"/><path d="M938.4 750L938.4 798.5" stroke="#22e022" stroke-width="1.2"/><path d="M669.5 712L675.5 719L681.5 712" stroke="#22e022" stroke-width="1" fill="none"/><path d="M671.5 714h8l-4 3z" stroke="#2020f0" stroke-width="0.5" fill="#2020f0"/><path d="M669.5 712L681.5 712" stroke="#22e022" stroke-width="1"/><rect x="669.5" y="705" width="12" height="5" fill="url(#tx22e022)" opacity="0.8"/><rect x="662" y="700" width="27" height="8" fill="url(#tx22e022)" opacity="0.9"/><path d="M759 720L765 727L771 720" stroke="#22e022" stroke-width="1" fill="none"/><path d="M761 722h8l-4 3z" stroke="#2020f0" stroke-width="0.5" fill="#2020f0"/><path d="M759 720L771 720" stroke="#22e022" stroke-width="1"/><rect x="759" y="713" width="12" height="5" fill="url(#tx22e022)" opacity="0.8"/><rect x="754" y="711" width="22" height="7" fill="url(#tx22e022)" opacity="0.9"/><path d="M819 720L825 727L831 720" stroke="#22e022" stroke-width="1" fill="none"/><path d="M821 722h8l-4 3z" stroke="#2020f0" stroke-width="0.5" fill="#2020f0"/><path d="M819 720L831 720" stroke="#22e022" stroke-width="1"/><rect x="819" y="713" width="12" height="5" fill="url(#tx22e022)" opacity="0.8"/><rect x="817" y="713" width="16" height="6" fill="url(#tx22e022)" opacity="0.9"/><rect x="854" y="717" width="26" height="4" fill="url(#tx22e022)" opacity="0.9"/><path d="M906.8 723.6L912.8 730.6L918.8 723.6" stroke="#22e022" stroke-width="1" fill="none"/><path d="M908.8 725.6h8l-4 3z" stroke="#2020f0" stroke-width="0.5" fill="#2020f0"/><path d="M906.8 723.6L918.8 723.6" stroke="#22e022" stroke-width="1"/><rect x="906.8" y="716.6" width="12" height="5" fill="url(#tx22e022)" opacity="0.8"/><rect x="903" y="718" width="20" height="5" fill="url(#tx22e022)" opacity="0.9"/><rect x="858" y="718" width="24" height="4" fill="url(#tx22e022)" opacity="0.9"/><rect x="955" y="727" width="16" height="5" fill="url(#tx22e022)" opacity="0.9"/><path d="M808 740L812 748" stroke="#c07060" stroke-width="1"/><rect x="815" y="746" width="30" height="4" fill="url(#tx22e022)" opacity="0.9"/><rect x="629" y="798.5" width="310" height="4.5" fill="url(#dots)" stroke="none" stroke-width="1"/><path d="M629 799.0L939 799.0" stroke="#2020f0" stroke-width="1.3"/><path d="M629 802.5L939 802.5" stroke="#2020f0" stroke-width="1.3"/><rect x="668.6" y="800" width="7.699999999999932" height="90" fill="url(#dots)" stroke="#2020f0" stroke-width="1.2"/><rect x="664" y="862" width="44" height="28" fill="url(#dots)" stroke="#2020f0" stroke-width="1.2"/><rect x="676" y="800" width="8" height="77" fill="none" stroke="#f020f0" stroke-width="1.8"/><circle cx="683" cy="822" r="1" fill="#f4f4f4"/><circle cx="683" cy="832" r="1" fill="#f4f4f4"/><circle cx="683" cy="842" r="1" fill="#f4f4f4"/><circle cx="683" cy="852" r="1" fill="#f4f4f4"/><circle cx="683" cy="862" r="1" fill="#f4f4f4"/><path d="M655 803H668V832Z" stroke="#e01818" stroke-width="0.8" fill="url(#brh)"/><rect x="714" y="803" width="8" height="14" fill="url(#dots)" stroke="#2020f0" stroke-width="1.2"/><rect x="845" y="803" width="7" height="14" fill="url(#dots)" stroke="#2020f0" stroke-width="1.2"/><path d="M723 811.4L880 811.4" stroke="#8c4a42" stroke-width="1.2"/><path d="M770 812l5 6 5-6zM893 812l5 6 5-6z" stroke="#8c4a42" stroke-width="0.8" fill="url(#brh)"/><rect x="697" y="862.7" width="282" height="11.299999999999955" fill="url(#dots)" stroke="none" stroke-width="1"/><path d="M697 863.2L979 863.2" stroke="#e01818" stroke-width="1.3"/><path d="M697 873.5L979 873.5" stroke="#2020f0" stroke-width="1.3"/><rect x="883" y="800" width="7.7000000000000455" height="77" fill="url(#dots)" stroke="#2020f0" stroke-width="1.2"/><rect x="929" y="800" width="9" height="77" fill="url(#dots)" stroke="#2020f0" stroke-width="1.2"/><path d="M877 803L877 862" stroke="#e01818" stroke-width="1.2"/><path d="M881 803L881 862" stroke="#e01818" stroke-width="1.2"/><path d="M895 803L895 862" stroke="#e01818" stroke-width="1.2"/><path d="M899 803L899 862" stroke="#e01818" stroke-width="1.2"/><rect x="714" y="874" width="7" height="5" fill="url(#dots)" stroke="#2020f0" stroke-width="1.2"/><rect x="845" y="874" width="7" height="5" fill="url(#dots)" stroke="#2020f0" stroke-width="1.2"/><rect x="885" y="874" width="7" height="5" fill="url(#dots)" stroke="#2020f0" stroke-width="1.2"/><rect x="929" y="874" width="7" height="5" fill="url(#dots)" stroke="#2020f0" stroke-width="1.2"/><rect x="954" y="866" width="25" height="8" fill="url(#dots)" stroke="none" stroke-width="1"/><path d="M668 907.6L974 907.6" stroke="#8a8a8a" stroke-width="1.2"/><path d="M668 880L668 912" stroke="#e01818" stroke-width="1.2"/><circle cx="723" cy="918" r="5.2" fill="none" stroke="#f0f020" stroke-width="1.5"/><circle cx="723" cy="918" r="2" fill="#2020f0" opacity="0.6"/><circle cx="723" cy="907.6" r="1.2" fill="#22e022"/><circle cx="806.5" cy="918" r="5.2" fill="none" stroke="#f0f020" stroke-width="1.5"/><circle cx="806.5" cy="918" r="2" fill="#2020f0" opacity="0.6"/><circle cx="806.5" cy="907.6" r="1.2" fill="#22e022"/><circle cx="848.7" cy="918" r="5.2" fill="none" stroke="#f0f020" stroke-width="1.5"/><circle cx="848.7" cy="918" r="2" fill="#2020f0" opacity="0.6"/><circle cx="848.7" cy="907.6" r="1.2" fill="#22e022"/><circle cx="890.7" cy="918" r="5.2" fill="none" stroke="#f0f020" stroke-width="1.5"/><circle cx="890.7" cy="918" r="2" fill="#2020f0" opacity="0.6"/><circle cx="890.7" cy="907.6" r="1.2" fill="#22e022"/><circle cx="933.4" cy="918" r="5.2" fill="none" stroke="#f0f020" stroke-width="1.5"/><circle cx="933.4" cy="918" r="2" fill="#2020f0" opacity="0.6"/><circle cx="933.4" cy="907.6" r="1.2" fill="#22e022"/><circle cx="974" cy="918" r="5.2" fill="none" stroke="#f0f020" stroke-width="1.5"/><circle cx="974" cy="918" r="2" fill="#2020f0" opacity="0.6"/><circle cx="974" cy="907.6" r="1.2" fill="#22e022"/><rect x="695" y="904" width="7" height="3" fill="url(#tx22e022)" opacity="0.9"/><rect x="764" y="904" width="7" height="3" fill="url(#tx22e022)" opacity="0.9"/><rect x="828" y="904" width="7" height="3" fill="url(#tx22e022)" opacity="0.9"/><rect x="870" y="904" width="7" height="3" fill="url(#tx22e022)" opacity="0.9"/><rect x="912" y="904" width="7" height="3" fill="url(#tx22e022)" opacity="0.9"/><rect x="954" y="904" width="7" height="3" fill="url(#tx22e022)" opacity="0.9"/><circle cx="598" cy="912" r="6.5" fill="none" stroke="#2020f0" stroke-width="1.2"/><rect x="606" y="908" width="24" height="5" fill="url(#tx2020f0)" opacity="0.9"/><rect x="593" y="914" width="28" height="3" fill="url(#tx22e022)" opacity="0.8"/><path d="M730 789l2.5-4h5l2.5 4-2.5 4h-5z" fill="none" stroke="#f020f0" stroke-width="1.2"/><path d="M740 789L747 789" stroke="#8c4a42" stroke-width="0.8"/><path d="M747 789L747 798" stroke="#8c4a42" stroke-width="0.8"/><path d="M730 853l2.5-4h5l2.5 4-2.5 4h-5z" fill="none" stroke="#f020f0" stroke-width="1.2"/><path d="M740 853L747 853" stroke="#8c4a42" stroke-width="0.8"/><path d="M747 853L747 862" stroke="#8c4a42" stroke-width="0.8"/><path d="M902 853l2.5-4h5l2.5 4-2.5 4h-5z" fill="none" stroke="#f020f0" stroke-width="1.2"/><path d="M912 853L919 853" stroke="#8c4a42" stroke-width="0.8"/><path d="M919 853L919 862" stroke="#8c4a42" stroke-width="0.8"/><path d="M772 839l5-8 5 8z" stroke="#f020f0" stroke-width="1" fill="#c0a020"/><path d="M770 844a8 8 0 0 1 0-8M784 833a8 8 0 0 0 0-8" stroke="#8a8a8a" stroke-width="1.2" fill="none"/><path d="M904 839l5-8 5 8z" stroke="#f020f0" stroke-width="1" fill="#c0a020"/><path d="M902 844a8 8 0 0 1 0-8M916 833a8 8 0 0 0 0-8" stroke="#8a8a8a" stroke-width="1.2" fill="none"/><path d="M771 851L777 858L783 851" stroke="#22e022" stroke-width="1" fill="none"/><path d="M773 853h8l-4 3z" stroke="#2020f0" stroke-width="0.5" fill="#2020f0"/><path d="M771 851L783 851" stroke="#22e022" stroke-width="1"/><rect x="771" y="844" width="12" height="5" fill="url(#tx22e022)" opacity="0.8"/><rect x="764" y="841" width="27" height="6" fill="url(#tx22e022)" opacity="0.9"/><path d="M801 863a5 3 0 0 1 9 0a5 3 0 0 0 9 0" stroke="#20e0f0" stroke-width="1.2" fill="none"/><rect x="801" y="852" width="17" height="4" fill="url(#tx22e022)" opacity="0.9"/><rect x="813" y="866" width="4" height="7" fill="#22e022" stroke="none" stroke-width="1"/><path d="M954 858L960 865L966 858" stroke="#22e022" stroke-width="1" fill="none"/><path d="M956 860h8l-4 3z" stroke="#2020f0" stroke-width="0.5" fill="#2020f0"/><path d="M954 858L966 858" stroke="#22e022" stroke-width="1"/><rect x="954" y="851" width="12" height="5" fill="url(#tx22e022)" opacity="0.8"/><rect x="949" y="853" width="22" height="5" fill="url(#tx22e022)" opacity="0.9"/><path d="M669 791L675 798L681 791" stroke="#22e022" stroke-width="1" fill="none"/><path d="M671 793h8l-4 3z" stroke="#2020f0" stroke-width="0.5" fill="#2020f0"/><path d="M669 791L681 791" stroke="#22e022" stroke-width="1"/><rect x="669" y="784" width="12" height="5" fill="url(#tx22e022)" opacity="0.8"/><rect x="670" y="786" width="11" height="5" fill="url(#tx22e022)" opacity="0.9"/><path d="M899 789L905 796L911 789" stroke="#22e022" stroke-width="1" fill="none"/><path d="M901 791h8l-4 3z" stroke="#2020f0" stroke-width="0.5" fill="#2020f0"/><path d="M899 789L911 789" stroke="#22e022" stroke-width="1"/><rect x="899" y="782" width="12" height="5" fill="url(#tx22e022)" opacity="0.8"/><rect x="897" y="784" width="16" height="5" fill="url(#tx22e022)" opacity="0.9"/><rect x="771" y="809" width="9" height="4" fill="url(#tx22e022)" opacity="0.9"/><rect x="906" y="809" width="9" height="4" fill="url(#tx22e022)" opacity="0.9"/><rect x="736" y="785" width="6" height="4" fill="url(#txf020f0)" opacity="0.9"/></svg>
<div style="position:absolute;left:1805px;top:366px;width:48px;height:18px;background:#8a8a8a;border-radius:5px;border:1px solid #6a6a6a;"></div>
<div style="position:absolute;left:1876px;top:409px;width:32px;height:212px;background:#4f545b;border-radius:4px;border:1px dotted #2a2e33;"></div>
<div style="position:absolute;left:533px;top:918px;width:123px;height:15px;background:rgba(90,90,90,0.92);border-radius:2px;"></div>
<div style="position:absolute;left:533px;top:938px;width:228px;height:15px;background:rgba(90,90,90,0.92);border-radius:2px;"></div>
<div style="position:absolute;left:533px;top:958px;width:277px;height:15px;background:rgba(90,90,90,0.92);border-radius:2px;"></div>
<div style="position:absolute;left:474px;top:976px;width:54px;height:26px;background:linear-gradient(#5c5c5c,#3a3a3a 70%,#2e2e2e);border-radius:3px 0 0 0;"></div>
<div style="position:absolute;left:527px;top:976px;width:920px;height:26px;background:#c4c4c4;"></div>
<div style="position:absolute;left:527px;top:998px;width:920px;height:4px;background:#b2b2b2;"></div>
<svg width="1919" height="1027" style="position:absolute;left:0;top:0"><circle cx="1829" cy="279" r="53.6" fill="none" stroke="#464c55" stroke-width="12.7"/><rect x="1803" y="253" width="52" height="52" fill="#aaaaaa"/><rect x="1813" y="263" width="32" height="32" fill="#9a9a9a"/><path d="M1839.5 372.0h8l-4.0 5z" fill="#b0b0b0"/><circle cx="1892" cy="439" r="11" fill="none" stroke="#6e737a" stroke-width="1.3"/><circle cx="1892" cy="439" r="6.5" fill="none" stroke="#6e737a" stroke-width="1.3"/><path d="M1884 487v-10a2 2 0 0 1 4 0v-5a2 2 0 0 1 4 0v5-6a2 2 0 0 1 4 0v7a2 2 0 0 1 4 0v8c0 4-3 7-7 7h-2c-3 0-5-2-7-6" fill="none" stroke="#6e737a" stroke-width="1.2"/><path d="M1881 499l8 8M1881 499v4M1881 499h4M1901 499l-7 7M1901 499v4M1901 499h-4M1881 519l6-6M1881 519v-4M1881 519h4" stroke="#6e737a" stroke-width="1.2" fill="none"/><circle cx="1896" cy="512" r="4" fill="none" stroke="#6e737a" stroke-width="1.3"/><path d="M1899 515l4 4" stroke="#6e737a" stroke-width="2"/><path d="M1892 538v18M1888 542l4-5 4 5" stroke="#6e737a" stroke-width="1.4" fill="none"/><ellipse cx="1892" cy="549" rx="9" ry="3.5" fill="none" stroke="#6e737a" stroke-width="1.2"/><rect x="1880" y="577" width="6" height="5" fill="none" stroke="#6e737a"/><rect x="1888" y="577" width="6" height="5" fill="none" stroke="#6e737a"/><rect x="1896" y="577" width="6" height="5" fill="none" stroke="#6e737a"/><rect x="1880" y="585" width="17" height="12" fill="none" stroke="#6e737a"/><path d="M1886 588v6l6-3z" fill="#6e737a"/><path d="M1890.0 461.5h5l-2.5 3z" fill="#6e737a"/><path d="M1890.0 519.5h5l-2.5 3z" fill="#6e737a"/><path d="M1890.0 558.5h5l-2.5 3z" fill="#6e737a"/><path d="M1880 465.5h24M1880 573.5h24" stroke="#5c6168"/><circle cx="1901" cy="415" r="3" fill="#666a70"/><circle cx="1901" cy="615" r="3" fill="#666a70"/><path d="M478.5 980v17M482.5 980v17" stroke="#bdbdbd" stroke-width="1.4" stroke-dasharray="1.5 1.5"/><path d="M489 985l7 7M496 985l-7 7" stroke="#e0e0e0" stroke-width="2"/><path d="M511 989l8 8" stroke="#dcdcdc" stroke-width="2.6" stroke-linecap="round"/><path d="M513 984a4 4 0 1 0-2 6" stroke="#dcdcdc" stroke-width="2" fill="none"/><rect x="532.5" y="982.5" width="14" height="13" rx="1.5" fill="#b8b8b8" stroke="#8a8a8a"/><path d="M535 985l4 3.5-4 3.5" stroke="#333" stroke-width="1.1" fill="none"/><path d="M540 993h4.5" stroke="#333" stroke-width="1.1"/><path d="M550.5 986.5h5l-2.5 3z" fill="#555"/><path d="M1435 990.5l3.5-4 3.5 4z" fill="#333"/></svg>
<div style="position:absolute;left:1799.0px;top:271.0px;width:60px;text-align:center;height:17px;line-height:17px;font-size:12.5px;color:#505050;white-space:pre;font-weight:bold;">TOP</div>
<div style="position:absolute;left:1809.0px;top:210.0px;width:40px;text-align:center;height:28px;line-height:28px;font-size:20px;color:#b4b4b4;white-space:pre;font-weight:bold;transform:scaleX(0.85);">N</div>
<div style="position:absolute;left:1809.0px;top:321.5px;width:40px;text-align:center;height:28px;line-height:28px;font-size:20px;color:#b4b4b4;white-space:pre;font-weight:bold;transform:scaleX(0.85);">S</div>
<div style="position:absolute;left:1752.5px;top:265.5px;width:40px;text-align:center;height:28px;line-height:28px;font-size:20px;color:#b4b4b4;white-space:pre;font-weight:bold;transform:scaleX(0.85);">W</div>
<div style="position:absolute;left:1865.5px;top:265.5px;width:40px;text-align:center;height:28px;line-height:28px;font-size:20px;color:#b4b4b4;white-space:pre;font-weight:bold;transform:scaleX(0.85);">E</div>
<div style="position:absolute;left:1809px;top:367.0px;height:16px;line-height:16px;font-size:11.5px;color:#4a4a4a;white-space:pre;font-family:'Liberation Sans', sans-serif;">WCS</div>
<div style="position:absolute;left:535px;top:917.5px;height:16px;line-height:16px;font-size:11.6px;color:#f6f6f6;white-space:pre;font-family:'Liberation Mono', monospace;">Command: *Cancel*</div>
<div style="position:absolute;left:535px;top:937.5px;height:16px;line-height:16px;font-size:11.6px;color:#f6f6f6;white-space:pre;font-family:'Liberation Mono', monospace;">Command:   &lt;Switching to: Model&gt;</div>
<div style="position:absolute;left:535px;top:957.5px;height:16px;line-height:16px;font-size:11.6px;color:#f6f6f6;white-space:pre;font-family:'Liberation Mono', monospace;">Regenerating model - caching viewports.</div>
<div style="position:absolute;left:564px;top:980.5px;height:16px;line-height:16px;font-size:11.6px;color:#8a8a8a;white-space:pre;font-family:'Liberation Mono', monospace;font-style:italic;word-spacing:1.5px;">Type a command</div>
<div style="position:absolute;left:0px;top:1003px;width:1919px;height:24px;background:#3b3b3b;"></div>
<div style="position:absolute;left:0px;top:1003px;width:1919px;height:1px;background:#6c6c6c;"></div>
<div style="position:absolute;left:1357px;top:1005px;width:48px;height:22px;background:#4e4e4e;border:1px solid #5e5e5e;border-bottom:none;"></div>
<div style="position:absolute;left:1407px;top:1005px;width:64px;height:22px;background:#4e4e4e;border:1px solid #5e5e5e;border-bottom:none;"></div>
<div style="position:absolute;left:1473px;top:1005px;width:103px;height:22px;background:#4e4e4e;border:1px solid #5e5e5e;border-bottom:none;"></div>
<div style="position:absolute;left:1578px;top:1005px;width:62px;height:22px;background:#4e4e4e;border:1px solid #5e5e5e;border-bottom:none;"></div>
<div style="position:absolute;left:1642px;top:1005px;width:106px;height:22px;background:#4e4e4e;border:1px solid #5e5e5e;border-bottom:none;"></div>
<div style="position:absolute;left:1750px;top:1005px;width:39px;height:22px;background:#4e4e4e;border:1px solid #5e5e5e;border-bottom:none;"></div>
<div style="position:absolute;left:1791px;top:1005px;width:24px;height:22px;background:#4e4e4e;border:1px solid #5e5e5e;border-bottom:none;"></div>
<div style="position:absolute;left:1817px;top:1005px;width:25px;height:22px;background:#4e4e4e;border:1px solid #5e5e5e;border-bottom:none;"></div>
<div style="position:absolute;left:1844px;top:1005px;width:23px;height:22px;background:#4e4e4e;border:1px solid #5e5e5e;border-bottom:none;"></div>
<div style="position:absolute;left:1869px;top:1005px;width:50px;height:22px;background:#4e4e4e;border:1px solid #5e5e5e;border-bottom:none;"></div>
<div style="position:absolute;left:1433px;top:1006px;width:22px;height:21px;background:#5b8fc2;"></div>
<div style="position:absolute;left:1475px;top:1006px;width:22px;height:21px;background:#5b8fc2;"></div>
<div style="position:absolute;left:1602px;top:1006px;width:22px;height:21px;background:#5b8fc2;"></div>
<div style="position:absolute;left:1644px;top:1006px;width:22px;height:21px;background:#5b8fc2;"></div>
<svg width="1919" height="1027" style="position:absolute;left:0;top:0"><path d="M8 1004h66l-6 14c-1 2-3 3-5 3h-45c-2 0-4-1-5-3z" fill="#6a6a6a"/><path d="M70 1004h67l-5 14c-1 2-3 3-5 3h-47c-2 0-4-1-5-3z" fill="#585858"/><path d="M140 1004h22l-4 12c-1 3-3 5-6 5h-15l2-12c1-3 1-5 1-5z" fill="#505050"/><path d="M150 1007v10M145 1012h10" stroke="#d8d8d8" stroke-width="2"/><path d="M1412 1011h15M1412 1016h15M1412 1021h15M1415 1008v16M1419.5 1008v16M1424 1008v16" stroke="#e0e0e0" stroke-width="1.1"/><rect x="1438" y="1010" width="2" height="2" fill="#f4f4f4"/><rect x="1438" y="1015" width="2" height="2" fill="#f4f4f4"/><rect x="1438" y="1020" width="2" height="2" fill="#f4f4f4"/><rect x="1443" y="1010" width="2" height="2" fill="#f4f4f4"/><rect x="1443" y="1015" width="2" height="2" fill="#f4f4f4"/><rect x="1443" y="1020" width="2" height="2" fill="#f4f4f4"/><rect x="1448" y="1010" width="2" height="2" fill="#f4f4f4"/><rect x="1448" y="1015" width="2" height="2" fill="#f4f4f4"/><rect x="1448" y="1020" width="2" height="2" fill="#f4f4f4"/><path d="M1459.5 1014.0h7l-3.5 4z" fill="#f0f0f0"/><path d="M1478.5 1008v16h16M1478.5 1019h5v5" stroke="#f4f4f4" stroke-width="1.2" fill="none"/><circle cx="1508" cy="1017" r="6" fill="none" stroke="#e0e0e0" stroke-width="1.1"/><path d="M1508 1017l7-7M1508 1017h10" stroke="#e0e0e0" stroke-width="1.1"/><path d="M1525.5 1014.0h7l-3.5 4z" fill="#f0f0f0"/><path d="M1542 1008l13 16" stroke="#c86a50" stroke-width="1.1"/><path d="M1548 1007v18" stroke="#70c080" stroke-width="1.1"/><circle cx="1548" cy="1016" r="1.5" fill="#ddd"/><path d="M1564.5 1014.0h7l-3.5 4z" fill="#f0f0f0"/><path d="M1581 1023h16M1581 1023l13-11" stroke="#e0e0e0" stroke-width="1.1"/><rect x="1586" y="1016" width="3" height="3" fill="#e0e0e0"/><rect x="1605.5" y="1009.5" width="15" height="15" fill="none" stroke="#f4f4f4" stroke-width="1.1"/><rect x="1604" y="1007" width="4" height="4" fill="#5b8fc2" stroke="#f4f4f4"/><path d="M1628.5 1014.0h7l-3.5 4z" fill="#f0f0f0"/><path d="M1655 1008l-6 16 6-4 6 4z" fill="#f6f6f6"/><circle cx="1661" cy="1011" r="2.5" fill="none" stroke="#f6f6f6"/><path d="M1678 1008l-6 16 6-4 6 4z" fill="#cfcfcf"/><path d="M1684 1009l-2 3h2l-2 3" stroke="#cfcfcf" fill="none"/><path d="M1703 1008l-6 16 6-4 6 4z" fill="#cfcfcf"/><path d="M1737.5 1014.0h7l-3.5 4z" fill="#f0f0f0"/><circle cx="1762.5" cy="1016" r="5" fill="none" stroke="#ddd" stroke-width="3"/><circle cx="1762.5" cy="1016" r="7" fill="none" stroke="#ddd" stroke-width="2" stroke-dasharray="2.2 1.5"/><path d="M1778.5 1014.0h7l-3.5 4z" fill="#f0f0f0"/><path d="M1803 1009v15M1795.5 1016.5h15" stroke="#eee" stroke-width="1.5"/><rect x="1822" y="1009" width="6" height="6" fill="none" stroke="#ddd"/><circle cx="1834" cy="1015" r="3.5" fill="none" stroke="#ddd"/><path d="M1828 1018l-3.5 6h7z" fill="none" stroke="#ddd"/><rect x="1849" y="1010" width="11" height="14" fill="#6aa0d8"/><rect x="1849" y="1019" width="8" height="5" fill="#e0d050"/><path d="M1854 1020l3 3 6-6" stroke="#20c030" stroke-width="2" fill="none"/><rect x="1874" y="1010" width="16" height="13" fill="none" stroke="#ddd" stroke-width="1.2"/><path d="M1877 1020l4-4M1887 1012l-4 4" stroke="#ddd"/><path d="M1898 1009.5h16M1898 1016h16M1898 1022.5h16" stroke="#e6e6e6" stroke-width="2"/></svg>
<div style="position:absolute;left:23px;top:1004.5px;height:16px;line-height:16px;font-size:12px;color:#ffffff;white-space:pre;font-family:'Liberation Sans', sans-serif;font-weight:bold;">Model</div>
<div style="position:absolute;left:81px;top:1004.5px;height:16px;line-height:16px;font-size:12px;color:#d8d8d8;white-space:pre;font-family:'Liberation Sans', sans-serif;">Layout1</div>
<div style="position:absolute;left:1361px;top:1008.0px;height:16px;line-height:16px;font-size:12px;color:#f0f0f0;white-space:pre;font-family:'Liberation Sans', sans-serif;">MODEL</div>
<div style="position:absolute;left:1720px;top:1008.0px;height:16px;line-height:16px;font-size:12px;color:#f0e0b0;white-space:pre;font-family:'Liberation Sans', sans-serif;">1:1</div>
</body></html>
